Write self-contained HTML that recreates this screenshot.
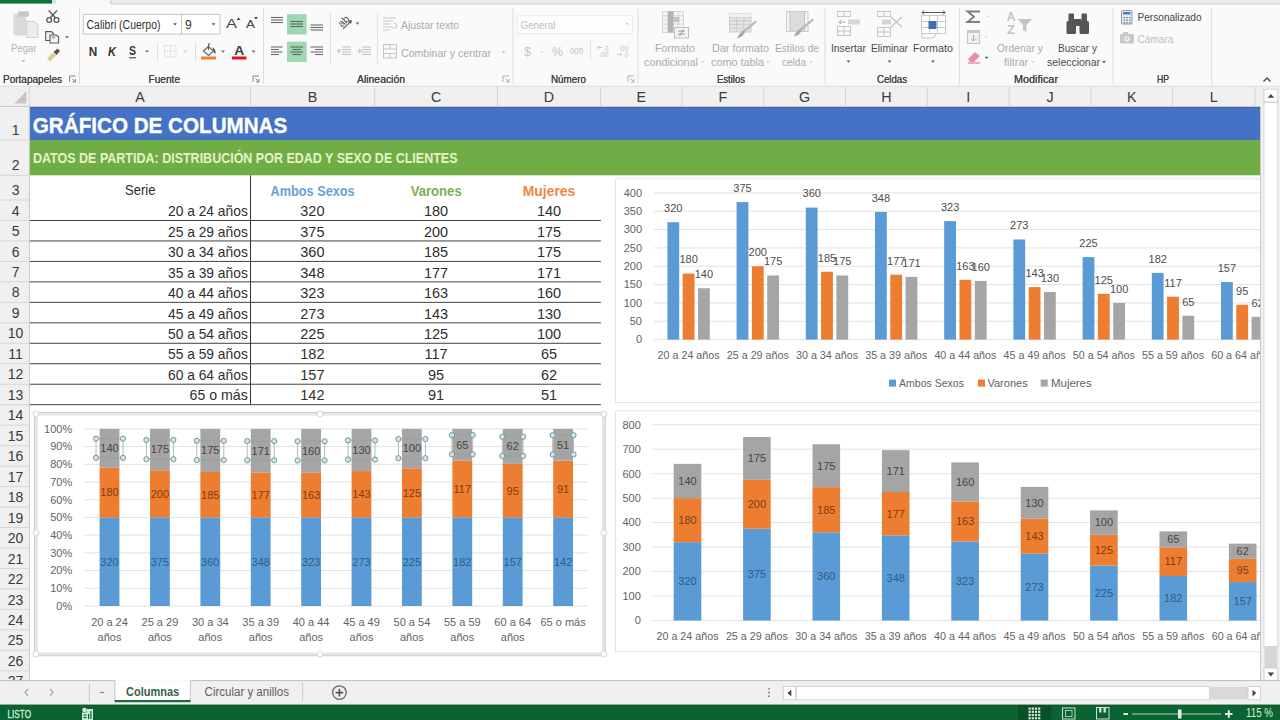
<!DOCTYPE html>
<html><head><meta charset="utf-8"><style>
html,body{margin:0;padding:0;width:1280px;height:720px;overflow:hidden;background:#fff}
svg{display:block}
text{font-family:"Liberation Sans",sans-serif}
</style></head><body>
<svg width="1280" height="720" viewBox="0 0 1280 720">
<rect x="0.00" y="0.00" width="1280.00" height="720.00" fill="#ffffff" />
<rect x="0.00" y="0.00" width="1280.00" height="5.00" fill="#f9f9f9" />
<rect x="0.00" y="0.00" width="52.00" height="3.60" fill="#12703b" />
<rect x="52.00" y="0.00" width="4.00" height="3.60" fill="#cfe9d6" />
<rect x="110.50" y="0.00" width="1169.50" height="3.60" fill="#ececec" />
<line x1="110.80" y1="0.00" x2="110.80" y2="4.00" stroke="#c8c8c8" stroke-width="1" />
<line x1="110.50" y1="3.90" x2="1280.00" y2="3.90" stroke="#cccccc" stroke-width="0.9" />
<rect x="0.00" y="5.00" width="1280.00" height="81.00" fill="#fafafa" />
<line x1="0.00" y1="86.30" x2="1280.00" y2="86.30" stroke="#d6d6d6" stroke-width="1" />
<line x1="79.50" y1="8.00" x2="79.50" y2="84.00" stroke="#dcdcdc" stroke-width="1" />
<line x1="263.50" y1="8.00" x2="263.50" y2="84.00" stroke="#dcdcdc" stroke-width="1" />
<line x1="513.00" y1="8.00" x2="513.00" y2="84.00" stroke="#dcdcdc" stroke-width="1" />
<line x1="638.00" y1="8.00" x2="638.00" y2="84.00" stroke="#dcdcdc" stroke-width="1" />
<line x1="825.00" y1="8.00" x2="825.00" y2="84.00" stroke="#dcdcdc" stroke-width="1" />
<line x1="959.40" y1="8.00" x2="959.40" y2="84.00" stroke="#dcdcdc" stroke-width="1" />
<line x1="1113.00" y1="8.00" x2="1113.00" y2="84.00" stroke="#dcdcdc" stroke-width="1" />
<line x1="1211.60" y1="8.00" x2="1211.60" y2="84.00" stroke="#dcdcdc" stroke-width="1" />
<text x="32.50" y="83.35" font-size="11" fill="#444444" text-anchor="middle" textLength="59.00" lengthAdjust="spacingAndGlyphs" >Portapapeles</text>
<text x="164.30" y="83.35" font-size="11" fill="#444444" text-anchor="middle" textLength="31.40" lengthAdjust="spacingAndGlyphs" >Fuente</text>
<text x="381.00" y="83.35" font-size="11" fill="#444444" text-anchor="middle" textLength="48.00" lengthAdjust="spacingAndGlyphs" >Alineación</text>
<text x="568.50" y="83.35" font-size="11" fill="#444444" text-anchor="middle" textLength="35.00" lengthAdjust="spacingAndGlyphs" >Número</text>
<text x="731.00" y="83.35" font-size="11" fill="#444444" text-anchor="middle" textLength="28.00" lengthAdjust="spacingAndGlyphs" >Estilos</text>
<text x="892.00" y="83.35" font-size="11" fill="#444444" text-anchor="middle" textLength="30.00" lengthAdjust="spacingAndGlyphs" >Celdas</text>
<text x="1036.00" y="83.35" font-size="11" fill="#444444" text-anchor="middle" textLength="44.00" lengthAdjust="spacingAndGlyphs" >Modificar</text>
<text x="1163.00" y="83.35" font-size="11" fill="#444444" text-anchor="middle" textLength="12.00" lengthAdjust="spacingAndGlyphs" >HP</text>
<rect x="13.5" y="13.6" width="12.8" height="22" rx="1.5" fill="#d9d9d9"/>
<rect x="18" y="11.3" width="11" height="5.5" rx="1.5" fill="#c9c9c9"/>
<path d="M26.7 21.3 H34.5 L38 24.8 V37.5 H26.7 Z" fill="#ececec" stroke="#cfcfcf" stroke-width="1"/>
<text x="23.80" y="51.52" font-size="11.5" fill="#b3b3b3" text-anchor="middle" textLength="25.60" lengthAdjust="spacingAndGlyphs" >Pegar</text>
<polygon points="21.70,60.10 25.30,60.10 23.50,62.20" fill="#b8b8b8"/>
<g fill="none" stroke="#5a5a5a" stroke-width="1.3"><circle cx="49.2" cy="20" r="2.4"/><circle cx="56.5" cy="20" r="2.4"/><path d="M50.3 17.8 L57 10.5 M55.4 17.8 L48.7 10.5"/></g>
<g fill="#f4f4f4" stroke="#5a5a5a" stroke-width="1.1"><path d="M45.7 31.6 H51.5 L53.5 33.6 V40.5 H45.7 Z"/><path d="M50 35 H56.5 L58.6 37.1 V43 H50 Z"/></g>
<circle cx="53.5" cy="37" r="2" fill="#9ec3d8"/>
<polygon points="65.00,36.30 69.00,36.30 67.00,38.60" fill="#666"/>
<path d="M47 58.5 L53 52.5 L56 55.5 L50 61.5 Z" fill="#d8d08a"/><path d="M53.5 52 L57.5 48.5 L60 51 L56.5 55 Z" fill="#555"/>
<text x="32.50" y="83.35" font-size="11" fill="#444444" text-anchor="middle" textLength="59.00" lengthAdjust="spacingAndGlyphs" >Portapapeles</text>
<path d="M69.5 82 V76 H75.5" fill="none" stroke="#777" stroke-width="0.9"/><path d="M72.0 78.5 L75.5 82 M75.5 79 V82 H72.5" fill="none" stroke="#777" stroke-width="0.9"/>
<rect x="83.3" y="14.4" width="98.2" height="19.6" fill="#ffffff" stroke="#c6c6c6" stroke-width="1"/>
<rect x="181.5" y="14.4" width="38.5" height="19.6" fill="#ffffff" stroke="#c6c6c6" stroke-width="1"/>
<text x="86.50" y="28.70" font-size="12" fill="#333333" text-anchor="start" textLength="74.00" lengthAdjust="spacingAndGlyphs" >Calibri (Cuerpo)</text>
<polygon points="173.10,23.35 176.90,23.35 175.00,25.55" fill="#555"/>
<text x="185.00" y="28.70" font-size="12" fill="#333333" text-anchor="start" >9</text>
<polygon points="211.60,23.35 215.40,23.35 213.50,25.55" fill="#555"/>
<text x="231.50" y="28.35" font-size="13" fill="#444" text-anchor="middle" textLength="11.00" lengthAdjust="spacingAndGlyphs" >A</text>
<path d="M236.5 20 L238.5 17.5 L240.5 20 Z" fill="#444"/>
<text x="250.50" y="28.35" font-size="11" fill="#444" text-anchor="middle" textLength="9.00" lengthAdjust="spacingAndGlyphs" >A</text>
<path d="M254 17 L256 19.5 L258 17 Z" fill="#444"/>
<text x="93.00" y="55.88" font-size="12.5" fill="#333" text-anchor="middle" font-weight="bold" textLength="8.50" lengthAdjust="spacingAndGlyphs" >N</text>
<text x="112.00" y="55.88" font-size="12.5" fill="#333" text-anchor="middle" font-weight="bold" textLength="8.00" lengthAdjust="spacingAndGlyphs" font-style="italic">K</text>
<text x="132.50" y="55.20" font-size="12" fill="#333" text-anchor="middle" font-weight="bold" textLength="7.00" lengthAdjust="spacingAndGlyphs" >S</text>
<line x1="129.00" y1="57.80" x2="136.00" y2="57.80" stroke="#333" stroke-width="1" />
<polygon points="145.10,50.55 148.90,50.55 147.00,52.75" fill="#666"/>
<line x1="157.50" y1="42.00" x2="157.50" y2="62.00" stroke="#e0e0e0" stroke-width="1" />
<g fill="none" stroke="#d0d0d0" stroke-width="1" stroke-dasharray="1.2 1"><rect x="164.5" y="45.5" width="11.5" height="11.5"/><path d="M170.25 45.5 V57 M164.5 51.25 H176"/></g>
<polygon points="183.10,50.55 186.90,50.55 185.00,52.75" fill="#c8c8c8"/>
<line x1="195.50" y1="42.00" x2="195.50" y2="62.00" stroke="#e0e0e0" stroke-width="1" />
<path d="M203.5 51 L208.5 46.5 L213.5 51 L208.5 55.5 Z" fill="#fff" stroke="#606060" stroke-width="1.1"/><path d="M208.5 50 V44.5 Q209 43 210 44.5" fill="none" stroke="#606060" stroke-width="1.1"/><path d="M212.5 47 Q216 49 215.5 53.5 L214 53.5 Z" fill="#4a6070"/>
<rect x="201.00" y="56.50" width="15.00" height="3.00" fill="#ed7d31" />
<polygon points="221.10,50.55 224.90,50.55 223.00,52.75" fill="#666"/>
<text x="239.20" y="55.17" font-size="12.5" fill="#404040" text-anchor="middle" font-weight="bold" textLength="10.00" lengthAdjust="spacingAndGlyphs" >A</text>
<rect x="232.00" y="56.50" width="14.50" height="3.00" fill="#e0131e" />
<polygon points="251.60,50.55 255.40,50.55 253.50,52.75" fill="#666"/>
<text x="164.30" y="83.35" font-size="11" fill="#444444" text-anchor="middle" textLength="31.40" lengthAdjust="spacingAndGlyphs" >Fuente</text>
<path d="M253 82 V76 H259" fill="none" stroke="#777" stroke-width="0.9"/><path d="M255.5 78.5 L259 82 M259 79 V82 H256" fill="none" stroke="#777" stroke-width="0.9"/>
<line x1="271.00" y1="17.50" x2="283.00" y2="17.50" stroke="#6a6a6a" stroke-width="1.1" />
<line x1="271.00" y1="20.00" x2="283.00" y2="20.00" stroke="#6a6a6a" stroke-width="1.1" />
<line x1="271.00" y1="22.50" x2="283.00" y2="22.50" stroke="#6a6a6a" stroke-width="1.1" />
<rect x="287.00" y="14.20" width="19.70" height="20.30" fill="#9fd7b4" />
<line x1="290.50" y1="21.50" x2="303.00" y2="21.50" stroke="#5a6a60" stroke-width="1.1" />
<line x1="290.50" y1="24.00" x2="303.00" y2="24.00" stroke="#5a6a60" stroke-width="1.1" />
<line x1="290.50" y1="26.50" x2="303.00" y2="26.50" stroke="#5a6a60" stroke-width="1.1" />
<line x1="310.50" y1="25.00" x2="323.00" y2="25.00" stroke="#6a6a6a" stroke-width="1.1" />
<line x1="310.50" y1="27.50" x2="323.00" y2="27.50" stroke="#6a6a6a" stroke-width="1.1" />
<line x1="310.50" y1="30.00" x2="323.00" y2="30.00" stroke="#6a6a6a" stroke-width="1.1" />
<line x1="271.00" y1="47.00" x2="282.50" y2="47.00" stroke="#6a6a6a" stroke-width="1.1" />
<line x1="271.00" y1="49.50" x2="279.00" y2="49.50" stroke="#6a6a6a" stroke-width="1.1" />
<line x1="271.00" y1="52.00" x2="282.50" y2="52.00" stroke="#6a6a6a" stroke-width="1.1" />
<line x1="271.00" y1="54.50" x2="279.00" y2="54.50" stroke="#6a6a6a" stroke-width="1.1" />
<rect x="287.00" y="41.60" width="19.70" height="20.40" fill="#9fd7b4" />
<line x1="290.50" y1="47.00" x2="303.00" y2="47.00" stroke="#5a6a60" stroke-width="1.1" />
<line x1="292.50" y1="49.50" x2="301.00" y2="49.50" stroke="#5a6a60" stroke-width="1.1" />
<line x1="290.50" y1="52.00" x2="303.00" y2="52.00" stroke="#5a6a60" stroke-width="1.1" />
<line x1="292.50" y1="54.50" x2="301.00" y2="54.50" stroke="#5a6a60" stroke-width="1.1" />
<line x1="310.50" y1="47.00" x2="323.00" y2="47.00" stroke="#6a6a6a" stroke-width="1.1" />
<line x1="315.00" y1="49.50" x2="323.00" y2="49.50" stroke="#6a6a6a" stroke-width="1.1" />
<line x1="310.50" y1="52.00" x2="323.00" y2="52.00" stroke="#6a6a6a" stroke-width="1.1" />
<line x1="315.00" y1="54.50" x2="323.00" y2="54.50" stroke="#6a6a6a" stroke-width="1.1" />
<line x1="330.50" y1="13.00" x2="330.50" y2="64.00" stroke="#e0e0e0" stroke-width="1" />
<text x="337.5" y="25.5" font-size="10.5" fill="#555" transform="rotate(-45 342.5 21.5)">ab</text>
<path d="M343 29 L351 21" fill="none" stroke="#666" stroke-width="1.1"/><path d="M352 20 L348 21 L351 24 Z" fill="#555"/>
<polygon points="355.60,22.55 359.40,22.55 357.50,24.75" fill="#666"/>
<line x1="342.00" y1="47.00" x2="351.00" y2="47.00" stroke="#c4c4c4" stroke-width="1.1" />
<line x1="342.00" y1="49.50" x2="351.00" y2="49.50" stroke="#c4c4c4" stroke-width="1.1" />
<line x1="342.00" y1="52.00" x2="351.00" y2="52.00" stroke="#c4c4c4" stroke-width="1.1" />
<line x1="342.00" y1="54.50" x2="351.00" y2="54.50" stroke="#c4c4c4" stroke-width="1.1" />
<line x1="362.00" y1="47.00" x2="371.00" y2="47.00" stroke="#c4c4c4" stroke-width="1.1" />
<line x1="362.00" y1="49.50" x2="371.00" y2="49.50" stroke="#c4c4c4" stroke-width="1.1" />
<line x1="362.00" y1="52.00" x2="371.00" y2="52.00" stroke="#c4c4c4" stroke-width="1.1" />
<line x1="362.00" y1="54.50" x2="371.00" y2="54.50" stroke="#c4c4c4" stroke-width="1.1" />
<path d="M341 51 L337.5 51 M339.5 49 L337.5 51 L339.5 53" fill="none" stroke="#c4c4c4" stroke-width="1.1"/>
<path d="M357.5 51 L361 51 M359 49 L361 51 L359 53" fill="none" stroke="#c4c4c4" stroke-width="1.1"/>
<line x1="377.50" y1="13.00" x2="377.50" y2="64.00" stroke="#e0e0e0" stroke-width="1" />
<g stroke="#c8c8c8" stroke-width="1.1" fill="none"><path d="M383 18 H396 M383 21 H393 M383 24 H390 M383 27 H393 M383 30 H390"/><path d="M394 23 Q398 24 396 28 L393 28"/></g>
<text x="401.00" y="29.02" font-size="11.5" fill="#ababab" text-anchor="start" textLength="58.00" lengthAdjust="spacingAndGlyphs" >Ajustar texto</text>
<g stroke="#c8c8c8" stroke-width="1.1" fill="none"><rect x="383.5" y="44.5" width="13" height="13.5"/><path d="M383.5 49 H396.5 M383.5 53.5 H396.5 M390 44.5 V49 M390 53.5 V58"/></g>
<text x="401.00" y="56.52" font-size="11.5" fill="#ababab" text-anchor="start" textLength="90.00" lengthAdjust="spacingAndGlyphs" >Combinar y centrar</text>
<polygon points="501.70,51.10 505.30,51.10 503.50,53.20" fill="#c4c4c4"/>
<text x="381.00" y="83.35" font-size="11" fill="#444444" text-anchor="middle" textLength="48.00" lengthAdjust="spacingAndGlyphs" >Alineación</text>
<path d="M503 82 V76 H509" fill="none" stroke="#aaa" stroke-width="0.9"/><path d="M505.5 78.5 L509 82 M509 79 V82 H506" fill="none" stroke="#aaa" stroke-width="0.9"/>
<rect x="517" y="15.6" width="115.5" height="18.2" fill="#fdfdfd" stroke="#ececec" stroke-width="1"/>
<text x="520.50" y="28.52" font-size="11.5" fill="#c0c0c0" text-anchor="start" textLength="35.00" lengthAdjust="spacingAndGlyphs" >General</text>
<polygon points="625.20,23.10 628.80,23.10 627.00,25.20" fill="#cfcfcf"/>
<text x="527.50" y="56.05" font-size="13" fill="#c4c4c4" text-anchor="middle" textLength="7.00" lengthAdjust="spacingAndGlyphs" >$</text>
<polygon points="540.40,51.20 543.60,51.20 542.00,53.10" fill="#cfcfcf"/>
<text x="557.50" y="55.88" font-size="12.5" fill="#c4c4c4" text-anchor="middle" textLength="11.00" lengthAdjust="spacingAndGlyphs" >%</text>
<text x="576.50" y="54.48" font-size="8.5" fill="#c4c4c4" text-anchor="middle" textLength="13.00" lengthAdjust="spacingAndGlyphs" >000</text>
<line x1="590.50" y1="40.00" x2="590.50" y2="61.00" stroke="#e4e4e4" stroke-width="1" />
<text x="606.50" y="50.57" font-size="6.5" fill="#c2c2c2" text-anchor="middle" >0</text>
<text x="604.50" y="57.07" font-size="6.5" fill="#c2c2c2" text-anchor="middle" textLength="8.00" lengthAdjust="spacingAndGlyphs" >00</text>
<path d="M597.5 47.5 H602 M599.3 45.8 L597.5 47.5 L599.3 49.2" fill="none" stroke="#c4c4c4" stroke-width="0.9"/>
<text x="624.50" y="50.57" font-size="6.5" fill="#c2c2c2" text-anchor="middle" textLength="8.00" lengthAdjust="spacingAndGlyphs" >00</text>
<text x="626.50" y="57.07" font-size="6.5" fill="#c2c2c2" text-anchor="middle" >0</text>
<path d="M617 54.5 H622 M620.2 52.8 L622 54.5 L620.2 56.2" fill="none" stroke="#c4c4c4" stroke-width="0.9"/>
<text x="568.50" y="83.35" font-size="11" fill="#444444" text-anchor="middle" textLength="35.00" lengthAdjust="spacingAndGlyphs" >Número</text>
<path d="M628 82 V76 H634" fill="none" stroke="#aaa" stroke-width="0.9"/><path d="M630.5 78.5 L634 82 M634 79 V82 H631" fill="none" stroke="#aaa" stroke-width="0.9"/>
<rect x="662.5" y="11.5" width="21" height="21" fill="#f6f6f6" stroke="#d6d6d6" stroke-width="1"/>
<line x1="667.75" y1="11.50" x2="667.75" y2="32.50" stroke="#d6d6d6" stroke-width="1" />
<line x1="673.00" y1="11.50" x2="673.00" y2="32.50" stroke="#d6d6d6" stroke-width="1" />
<line x1="678.25" y1="11.50" x2="678.25" y2="32.50" stroke="#d6d6d6" stroke-width="1" />
<line x1="662.50" y1="15.70" x2="683.50" y2="15.70" stroke="#d6d6d6" stroke-width="1" />
<line x1="662.50" y1="19.90" x2="683.50" y2="19.90" stroke="#d6d6d6" stroke-width="1" />
<line x1="662.50" y1="24.10" x2="683.50" y2="24.10" stroke="#d6d6d6" stroke-width="1" />
<line x1="662.50" y1="28.30" x2="683.50" y2="28.30" stroke="#d6d6d6" stroke-width="1" />
<rect x="668.00" y="11.50" width="5.50" height="21.00" fill="#b4b4b4" />
<rect x="673.50" y="17.00" width="6.00" height="5.00" fill="#c4c4c4" />
<rect x="674.5" y="27.5" width="14" height="10.5" fill="#f4f4f4" stroke="#bdbdbd" stroke-width="1"/>
<path d="M678 31 H685 M678 34 H685 M683.5 29.5 L679.5 36" fill="none" stroke="#9a9a9a" stroke-width="1"/>
<text x="675.00" y="52.23" font-size="11.5" fill="#ababab" text-anchor="middle" textLength="40.00" lengthAdjust="spacingAndGlyphs" >Formato</text>
<text x="671.00" y="66.23" font-size="11.5" fill="#ababab" text-anchor="middle" textLength="54.00" lengthAdjust="spacingAndGlyphs" >condicional</text>
<polygon points="701.40,61.20 704.60,61.20 703.00,63.10" fill="#cacaca"/>
<rect x="729.5" y="13.5" width="21.5" height="18.5" fill="#e4e4e4" stroke="#cdcdcd" stroke-width="1"/>
<line x1="736.67" y1="13.50" x2="736.67" y2="32.00" stroke="#cdcdcd" stroke-width="1" />
<line x1="743.83" y1="13.50" x2="743.83" y2="32.00" stroke="#cdcdcd" stroke-width="1" />
<line x1="729.50" y1="17.20" x2="751.00" y2="17.20" stroke="#cdcdcd" stroke-width="1" />
<line x1="729.50" y1="20.90" x2="751.00" y2="20.90" stroke="#cdcdcd" stroke-width="1" />
<line x1="729.50" y1="24.60" x2="751.00" y2="24.60" stroke="#cdcdcd" stroke-width="1" />
<line x1="729.50" y1="28.30" x2="751.00" y2="28.30" stroke="#cdcdcd" stroke-width="1" />
<rect x="729.50" y="13.50" width="21.50" height="3.50" fill="#f2f2f2" />
<path d="M755.5 20.5 L757 22 L745 32 L743.5 30.5 Z" fill="#b8b8b8"/><path d="M743.5 30.5 L745 32 Q743 37 737 38.5 Q739 33 743.5 30.5 Z" fill="#a8a8a8"/>
<text x="740.50" y="52.23" font-size="11.5" fill="#ababab" text-anchor="middle" textLength="57.00" lengthAdjust="spacingAndGlyphs" >Dar formato</text>
<text x="737.50" y="66.23" font-size="11.5" fill="#ababab" text-anchor="middle" textLength="53.00" lengthAdjust="spacingAndGlyphs" >como tabla</text>
<polygon points="766.40,61.20 769.60,61.20 768.00,63.10" fill="#cacaca"/>
<rect x="786.5" y="11.5" width="21.5" height="20" fill="#f4f4f4" stroke="#cdcdcd" stroke-width="1"/>
<rect x="790.00" y="12.00" width="14.50" height="19.00" fill="#dcdcdc" />
<line x1="790.00" y1="11.50" x2="790.00" y2="31.50" stroke="#c4c4c4" stroke-width="1" />
<line x1="804.50" y1="11.50" x2="804.50" y2="31.50" stroke="#c4c4c4" stroke-width="1" />
<path d="M812.5 18.5 L814 20 L802 30 L800.5 28.5 Z" fill="#b8b8b8"/><path d="M800.5 28.5 L802 30 Q800 35 794 36.5 Q796 31 800.5 28.5 Z" fill="#a8a8a8"/>
<text x="797.00" y="52.23" font-size="11.5" fill="#ababab" text-anchor="middle" textLength="44.00" lengthAdjust="spacingAndGlyphs" >Estilos de</text>
<text x="794.00" y="66.23" font-size="11.5" fill="#ababab" text-anchor="middle" textLength="24.00" lengthAdjust="spacingAndGlyphs" >celda</text>
<polygon points="809.40,61.20 812.60,61.20 811.00,63.10" fill="#cacaca"/>
<text x="731.00" y="83.35" font-size="11" fill="#444444" text-anchor="middle" textLength="28.00" lengthAdjust="spacingAndGlyphs" >Estilos</text>
<g fill="none" stroke="#c6c6c6" stroke-width="1"><rect x="837.5" y="11.5" width="13" height="5"/><path d="M844 11.5 V16.5"/><rect x="837.5" y="26.5" width="13" height="9"/><path d="M844 26.5 V35.5 M837.5 31 H850.5"/></g>
<rect x="848" y="19.5" width="12" height="5" fill="#d6d6d6"/><path d="M839 22 H845 M841 20 L839 22 L841 24" fill="none" stroke="#aaa" stroke-width="1"/>
<text x="848.50" y="52.23" font-size="11.5" fill="#4a4a4a" text-anchor="middle" textLength="35.00" lengthAdjust="spacingAndGlyphs" >Insertar</text>
<polygon points="846.60,60.55 850.40,60.55 848.50,62.75" fill="#555"/>
<g fill="none" stroke="#c6c6c6" stroke-width="1"><rect x="877.5" y="11.5" width="13" height="5"/><path d="M884 11.5 V16.5"/><rect x="877.5" y="27.5" width="13" height="9"/><path d="M884 27.5 V36.5 M877.5 32 H890.5"/></g>
<rect x="882" y="19.5" width="9" height="5" fill="#d6d6d6"/><path d="M891 17 L902 27 M902 17 L891 27" stroke="#c2c2c2" stroke-width="1.2"/>
<text x="889.50" y="52.23" font-size="11.5" fill="#4a4a4a" text-anchor="middle" textLength="37.00" lengthAdjust="spacingAndGlyphs" >Eliminar</text>
<polygon points="887.60,60.55 891.40,60.55 889.50,62.75" fill="#555"/>
<rect x="921.5" y="15.5" width="24" height="18" fill="#ffffff" stroke="#c8c8c8" stroke-width="1"/>
<line x1="929.50" y1="15.50" x2="929.50" y2="33.50" stroke="#c8c8c8" stroke-width="1" />
<line x1="937.50" y1="15.50" x2="937.50" y2="33.50" stroke="#c8c8c8" stroke-width="1" />
<line x1="921.50" y1="21.50" x2="945.50" y2="21.50" stroke="#c8c8c8" stroke-width="1" />
<line x1="921.50" y1="27.50" x2="945.50" y2="27.50" stroke="#c8c8c8" stroke-width="1" />
<rect x="928.50" y="21.00" width="8.00" height="8.00" fill="#3f6fb5" />
<path d="M922 12.5 H945 M924 10.5 L922 12.5 L924 14.5 M943 10.5 L945 12.5 L943 14.5" fill="none" stroke="#555" stroke-width="1"/>
<path d="M922 33.5 V38 H932 Q936 37 936 33.5" fill="none" stroke="#c8c8c8" stroke-width="1"/>
<text x="933.00" y="52.23" font-size="11.5" fill="#4a4a4a" text-anchor="middle" textLength="40.00" lengthAdjust="spacingAndGlyphs" >Formato</text>
<polygon points="931.10,60.55 934.90,60.55 933.00,62.75" fill="#555"/>
<text x="892.00" y="83.35" font-size="11" fill="#444444" text-anchor="middle" textLength="30.00" lengthAdjust="spacingAndGlyphs" >Celdas</text>
<path d="M980 11.5 H967.5 L974 16.8 L967.5 22 H980" fill="none" stroke="#808080" stroke-width="1.9" stroke-linejoin="miter"/>
<polygon points="986.50,15.75 989.50,15.75 988.00,17.55" fill="#d0d0d0"/>
<rect x="967.5" y="30.5" width="12" height="13" fill="#f0f0f0" stroke="#c4c4c4" stroke-width="1"/><rect x="967.5" y="30.5" width="12" height="2.5" fill="#c8c8c8"/><path d="M973.5 35 V41 M971 38.5 L973.5 41 L976 38.5" fill="none" stroke="#aaa" stroke-width="1"/>
<polygon points="984.50,36.25 987.50,36.25 986.00,38.05" fill="#d0d0d0"/>
<path d="M968 59 L975 52 L980 56 L974 62 L970 62 Z" fill="#e88fa5"/><path d="M968 63 H980" stroke="#e06080" stroke-width="1"/>
<polygon points="984.60,56.85 988.40,56.85 986.50,59.05" fill="#555"/>
<text x="1011.00" y="20.70" font-size="12" fill="#c2c2c2" text-anchor="middle" font-weight="bold" textLength="8.50" lengthAdjust="spacingAndGlyphs" >A</text>
<text x="1011.00" y="34.20" font-size="12" fill="#c2c2c2" text-anchor="middle" font-weight="bold" textLength="8.00" lengthAdjust="spacingAndGlyphs" >Z</text>
<path d="M1017.5 19 H1032 L1026.5 25 V32 L1023 30 V25 Z" fill="#c4c4c4"/>
<text x="1020.00" y="52.23" font-size="11.5" fill="#ababab" text-anchor="middle" textLength="46.00" lengthAdjust="spacingAndGlyphs" >Ordenar y</text>
<text x="1016.00" y="66.23" font-size="11.5" fill="#ababab" text-anchor="middle" textLength="24.00" lengthAdjust="spacingAndGlyphs" >filtrar</text>
<polygon points="1031.40,61.20 1034.60,61.20 1033.00,63.10" fill="#cacaca"/>
<g fill="#555555"><rect x="1066.5" y="21" width="9.5" height="13" rx="1.5"/><rect x="1079.5" y="21" width="9.5" height="13" rx="1.5"/><rect x="1068.5" y="13.5" width="5.5" height="9" rx="1"/><rect x="1081.5" y="13.5" width="5.5" height="9" rx="1"/><rect x="1074" y="19" width="7.5" height="7"/></g>
<text x="1077.50" y="52.23" font-size="11.5" fill="#4a4a4a" text-anchor="middle" textLength="39.00" lengthAdjust="spacingAndGlyphs" >Buscar y</text>
<text x="1073.50" y="66.23" font-size="11.5" fill="#4a4a4a" text-anchor="middle" textLength="53.00" lengthAdjust="spacingAndGlyphs" >seleccionar</text>
<polygon points="1102.10,61.05 1105.90,61.05 1104.00,63.25" fill="#555"/>
<text x="1036.00" y="83.35" font-size="11" fill="#444444" text-anchor="middle" textLength="44.00" lengthAdjust="spacingAndGlyphs" >Modificar</text>
<rect x="1121.5" y="10.5" width="10.5" height="13.5" rx="1" fill="#e8eef4" stroke="#8a9aab" stroke-width="1"/><rect x="1123" y="12" width="7.5" height="2.5" fill="#4a7ab5"/>
<rect x="1123.50" y="17.00" width="1.60" height="1.40" fill="#7f8c99" />
<rect x="1126.20" y="17.00" width="1.60" height="1.40" fill="#7f8c99" />
<rect x="1129.00" y="17.00" width="1.60" height="1.40" fill="#7f8c99" />
<rect x="1123.50" y="19.50" width="1.60" height="1.40" fill="#7f8c99" />
<rect x="1126.20" y="19.50" width="1.60" height="1.40" fill="#7f8c99" />
<rect x="1129.00" y="19.50" width="1.60" height="1.40" fill="#7f8c99" />
<rect x="1123.50" y="22.00" width="1.60" height="1.40" fill="#7f8c99" />
<rect x="1126.20" y="22.00" width="1.60" height="1.40" fill="#7f8c99" />
<rect x="1129.00" y="22.00" width="1.60" height="1.40" fill="#7f8c99" />
<text x="1137.50" y="21.22" font-size="11.5" fill="#444" text-anchor="start" textLength="64.00" lengthAdjust="spacingAndGlyphs" >Personalizado</text>
<rect x="1120" y="34" width="14" height="9.5" rx="1.5" fill="#c8c8c8"/><rect x="1123" y="32" width="5" height="3" fill="#c8c8c8"/><circle cx="1127" cy="38.8" r="2.6" fill="#f4f4f4"/><circle cx="1127" cy="38.8" r="1.3" fill="#c8c8c8"/>
<text x="1137.50" y="42.52" font-size="11.5" fill="#bdbdbd" text-anchor="start" textLength="36.00" lengthAdjust="spacingAndGlyphs" >Cámara</text>
<text x="1163.00" y="83.35" font-size="11" fill="#444444" text-anchor="middle" textLength="12.00" lengthAdjust="spacingAndGlyphs" >HP</text>
<path d="M1263.5 81.5 L1267 78 L1270.5 81.5" fill="none" stroke="#444" stroke-width="1.3"/>
<rect x="0.00" y="86.80" width="1280.00" height="20.20" fill="#f0f0f0" />
<line x1="0.00" y1="106.50" x2="1260.50" y2="106.50" stroke="#c9c9c9" stroke-width="1" />
<line x1="29.40" y1="87.00" x2="29.40" y2="106.50" stroke="#d4d4d4" stroke-width="1" />
<line x1="250.50" y1="87.00" x2="250.50" y2="106.50" stroke="#d4d4d4" stroke-width="1" />
<line x1="374.70" y1="87.00" x2="374.70" y2="106.50" stroke="#d4d4d4" stroke-width="1" />
<line x1="497.40" y1="87.00" x2="497.40" y2="106.50" stroke="#d4d4d4" stroke-width="1" />
<line x1="600.50" y1="87.00" x2="600.50" y2="106.50" stroke="#d4d4d4" stroke-width="1" />
<line x1="681.90" y1="87.00" x2="681.90" y2="106.50" stroke="#d4d4d4" stroke-width="1" />
<line x1="763.70" y1="87.00" x2="763.70" y2="106.50" stroke="#d4d4d4" stroke-width="1" />
<line x1="845.50" y1="87.00" x2="845.50" y2="106.50" stroke="#d4d4d4" stroke-width="1" />
<line x1="927.30" y1="87.00" x2="927.30" y2="106.50" stroke="#d4d4d4" stroke-width="1" />
<line x1="1009.10" y1="87.00" x2="1009.10" y2="106.50" stroke="#d4d4d4" stroke-width="1" />
<line x1="1090.90" y1="87.00" x2="1090.90" y2="106.50" stroke="#d4d4d4" stroke-width="1" />
<line x1="1172.70" y1="87.00" x2="1172.70" y2="106.50" stroke="#d4d4d4" stroke-width="1" />
<line x1="1255.00" y1="87.00" x2="1255.00" y2="106.50" stroke="#d4d4d4" stroke-width="1" />
<text x="139.95" y="101.91" font-size="14.3" fill="#3a3a3a" text-anchor="middle" >A</text>
<text x="312.60" y="101.91" font-size="14.3" fill="#3a3a3a" text-anchor="middle" >B</text>
<text x="436.05" y="101.91" font-size="14.3" fill="#3a3a3a" text-anchor="middle" >C</text>
<text x="548.95" y="101.91" font-size="14.3" fill="#3a3a3a" text-anchor="middle" >D</text>
<text x="641.20" y="101.91" font-size="14.3" fill="#3a3a3a" text-anchor="middle" >E</text>
<text x="722.80" y="101.91" font-size="14.3" fill="#3a3a3a" text-anchor="middle" >F</text>
<text x="804.60" y="101.91" font-size="14.3" fill="#3a3a3a" text-anchor="middle" >G</text>
<text x="886.40" y="101.91" font-size="14.3" fill="#3a3a3a" text-anchor="middle" >H</text>
<text x="968.20" y="101.91" font-size="14.3" fill="#3a3a3a" text-anchor="middle" >I</text>
<text x="1050.00" y="101.91" font-size="14.3" fill="#3a3a3a" text-anchor="middle" >J</text>
<text x="1131.80" y="101.91" font-size="14.3" fill="#3a3a3a" text-anchor="middle" >K</text>
<text x="1213.85" y="101.91" font-size="14.3" fill="#3a3a3a" text-anchor="middle" >L</text>
<polygon points="26.5,91 26.5,103.5 14.4,103.5" fill="#c6c6c6"/>
<rect x="0.00" y="107.00" width="29.40" height="573.50" fill="#f0f0f0" />
<line x1="29.40" y1="106.50" x2="29.40" y2="680.50" stroke="#c9c9c9" stroke-width="1" />
<line x1="0.00" y1="140.00" x2="29.40" y2="140.00" stroke="#d6d6d6" stroke-width="1" />
<text x="15.60" y="135.10" font-size="14" fill="#3a3a3a" text-anchor="middle" >1</text>
<line x1="0.00" y1="175.30" x2="29.40" y2="175.30" stroke="#d6d6d6" stroke-width="1" />
<text x="15.60" y="170.40" font-size="14" fill="#3a3a3a" text-anchor="middle" >2</text>
<line x1="0.00" y1="200.00" x2="29.40" y2="200.00" stroke="#d6d6d6" stroke-width="1" />
<text x="15.60" y="195.10" font-size="14" fill="#3a3a3a" text-anchor="middle" >3</text>
<line x1="0.00" y1="220.47" x2="29.40" y2="220.47" stroke="#d6d6d6" stroke-width="1" />
<text x="15.60" y="215.57" font-size="14" fill="#3a3a3a" text-anchor="middle" >4</text>
<line x1="0.00" y1="240.94" x2="29.40" y2="240.94" stroke="#d6d6d6" stroke-width="1" />
<text x="15.60" y="236.04" font-size="14" fill="#3a3a3a" text-anchor="middle" >5</text>
<line x1="0.00" y1="261.41" x2="29.40" y2="261.41" stroke="#d6d6d6" stroke-width="1" />
<text x="15.60" y="256.51" font-size="14" fill="#3a3a3a" text-anchor="middle" >6</text>
<line x1="0.00" y1="281.88" x2="29.40" y2="281.88" stroke="#d6d6d6" stroke-width="1" />
<text x="15.60" y="276.98" font-size="14" fill="#3a3a3a" text-anchor="middle" >7</text>
<line x1="0.00" y1="302.35" x2="29.40" y2="302.35" stroke="#d6d6d6" stroke-width="1" />
<text x="15.60" y="297.45" font-size="14" fill="#3a3a3a" text-anchor="middle" >8</text>
<line x1="0.00" y1="322.82" x2="29.40" y2="322.82" stroke="#d6d6d6" stroke-width="1" />
<text x="15.60" y="317.92" font-size="14" fill="#3a3a3a" text-anchor="middle" >9</text>
<line x1="0.00" y1="343.29" x2="29.40" y2="343.29" stroke="#d6d6d6" stroke-width="1" />
<text x="15.60" y="338.39" font-size="14" fill="#3a3a3a" text-anchor="middle" >10</text>
<line x1="0.00" y1="363.76" x2="29.40" y2="363.76" stroke="#d6d6d6" stroke-width="1" />
<text x="15.60" y="358.86" font-size="14" fill="#3a3a3a" text-anchor="middle" >11</text>
<line x1="0.00" y1="384.23" x2="29.40" y2="384.23" stroke="#d6d6d6" stroke-width="1" />
<text x="15.60" y="379.33" font-size="14" fill="#3a3a3a" text-anchor="middle" >12</text>
<line x1="0.00" y1="404.70" x2="29.40" y2="404.70" stroke="#d6d6d6" stroke-width="1" />
<text x="15.60" y="399.80" font-size="14" fill="#3a3a3a" text-anchor="middle" >13</text>
<line x1="0.00" y1="425.17" x2="29.40" y2="425.17" stroke="#d6d6d6" stroke-width="1" />
<text x="15.60" y="420.27" font-size="14" fill="#3a3a3a" text-anchor="middle" >14</text>
<line x1="0.00" y1="445.64" x2="29.40" y2="445.64" stroke="#d6d6d6" stroke-width="1" />
<text x="15.60" y="440.74" font-size="14" fill="#3a3a3a" text-anchor="middle" >15</text>
<line x1="0.00" y1="466.11" x2="29.40" y2="466.11" stroke="#d6d6d6" stroke-width="1" />
<text x="15.60" y="461.21" font-size="14" fill="#3a3a3a" text-anchor="middle" >16</text>
<line x1="0.00" y1="486.58" x2="29.40" y2="486.58" stroke="#d6d6d6" stroke-width="1" />
<text x="15.60" y="481.68" font-size="14" fill="#3a3a3a" text-anchor="middle" >17</text>
<line x1="0.00" y1="507.05" x2="29.40" y2="507.05" stroke="#d6d6d6" stroke-width="1" />
<text x="15.60" y="502.15" font-size="14" fill="#3a3a3a" text-anchor="middle" >18</text>
<line x1="0.00" y1="527.52" x2="29.40" y2="527.52" stroke="#d6d6d6" stroke-width="1" />
<text x="15.60" y="522.62" font-size="14" fill="#3a3a3a" text-anchor="middle" >19</text>
<line x1="0.00" y1="547.99" x2="29.40" y2="547.99" stroke="#d6d6d6" stroke-width="1" />
<text x="15.60" y="543.09" font-size="14" fill="#3a3a3a" text-anchor="middle" >20</text>
<line x1="0.00" y1="568.46" x2="29.40" y2="568.46" stroke="#d6d6d6" stroke-width="1" />
<text x="15.60" y="563.56" font-size="14" fill="#3a3a3a" text-anchor="middle" >21</text>
<line x1="0.00" y1="588.93" x2="29.40" y2="588.93" stroke="#d6d6d6" stroke-width="1" />
<text x="15.60" y="584.03" font-size="14" fill="#3a3a3a" text-anchor="middle" >22</text>
<line x1="0.00" y1="609.40" x2="29.40" y2="609.40" stroke="#d6d6d6" stroke-width="1" />
<text x="15.60" y="604.50" font-size="14" fill="#3a3a3a" text-anchor="middle" >23</text>
<line x1="0.00" y1="629.87" x2="29.40" y2="629.87" stroke="#d6d6d6" stroke-width="1" />
<text x="15.60" y="624.97" font-size="14" fill="#3a3a3a" text-anchor="middle" >24</text>
<line x1="0.00" y1="650.34" x2="29.40" y2="650.34" stroke="#d6d6d6" stroke-width="1" />
<text x="15.60" y="645.44" font-size="14" fill="#3a3a3a" text-anchor="middle" >25</text>
<line x1="0.00" y1="670.81" x2="29.40" y2="670.81" stroke="#d6d6d6" stroke-width="1" />
<text x="15.60" y="665.91" font-size="14" fill="#3a3a3a" text-anchor="middle" >26</text>
<line x1="0.00" y1="691.28" x2="29.40" y2="691.28" stroke="#d6d6d6" stroke-width="1" />
<text x="15.60" y="686.38" font-size="14" fill="#3a3a3a" text-anchor="middle" >27</text>
<rect x="29.90" y="107.00" width="1231.10" height="33.00" fill="#4472c4" />
<line x1="29.90" y1="107.50" x2="1260.50" y2="107.50" stroke="#4a6697" stroke-width="1" />
<rect x="29.90" y="140.00" width="1231.10" height="35.30" fill="#70ad47" />
<text x="32.80" y="132.50" font-size="22.5" fill="#ffffff" text-anchor="start" font-weight="bold" textLength="254.50" lengthAdjust="spacingAndGlyphs" stroke="#ffffff" stroke-width="0.35">GRÁFICO DE COLUMNAS</text>
<text x="33.00" y="162.84" font-size="14" fill="#e4f3c6" text-anchor="start" font-weight="bold" textLength="424.50" lengthAdjust="spacingAndGlyphs" >DATOS DE PARTIDA: DISTRIBUCIÓN POR EDAD Y SEXO DE CLIENTES</text>
<text x="140.30" y="195.07" font-size="14.5" fill="#2e2e2e" text-anchor="middle" textLength="30.50" lengthAdjust="spacingAndGlyphs" >Serie</text>
<text x="312.60" y="195.60" font-size="14" fill="#66a1d8" text-anchor="middle" font-weight="bold" textLength="84.00" lengthAdjust="spacingAndGlyphs" >Ambos Sexos</text>
<text x="436.20" y="195.60" font-size="14" fill="#78b156" text-anchor="middle" font-weight="bold" textLength="51.00" lengthAdjust="spacingAndGlyphs" >Varones</text>
<text x="549.00" y="195.60" font-size="14" fill="#ee8646" text-anchor="middle" font-weight="bold" textLength="52.50" lengthAdjust="spacingAndGlyphs" >Mujeres</text>
<text x="247.80" y="216.14" font-size="14.5" fill="#2e2e2e" text-anchor="end" textLength="79.80" lengthAdjust="spacingAndGlyphs" >20 a 24 años</text>
<text x="312.40" y="216.14" font-size="14.5" fill="#2e2e2e" text-anchor="middle" >320</text>
<text x="436.00" y="216.14" font-size="14.5" fill="#2e2e2e" text-anchor="middle" >180</text>
<text x="549.00" y="216.14" font-size="14.5" fill="#2e2e2e" text-anchor="middle" >140</text>
<line x1="29.90" y1="220.47" x2="600.90" y2="220.47" stroke="#404040" stroke-width="1" />
<text x="247.80" y="236.61" font-size="14.5" fill="#2e2e2e" text-anchor="end" textLength="79.80" lengthAdjust="spacingAndGlyphs" >25 a 29 años</text>
<text x="312.40" y="236.61" font-size="14.5" fill="#2e2e2e" text-anchor="middle" >375</text>
<text x="436.00" y="236.61" font-size="14.5" fill="#2e2e2e" text-anchor="middle" >200</text>
<text x="549.00" y="236.61" font-size="14.5" fill="#2e2e2e" text-anchor="middle" >175</text>
<line x1="29.90" y1="240.94" x2="600.90" y2="240.94" stroke="#404040" stroke-width="1" />
<text x="247.80" y="257.08" font-size="14.5" fill="#2e2e2e" text-anchor="end" textLength="79.80" lengthAdjust="spacingAndGlyphs" >30 a 34 años</text>
<text x="312.40" y="257.08" font-size="14.5" fill="#2e2e2e" text-anchor="middle" >360</text>
<text x="436.00" y="257.08" font-size="14.5" fill="#2e2e2e" text-anchor="middle" >185</text>
<text x="549.00" y="257.08" font-size="14.5" fill="#2e2e2e" text-anchor="middle" >175</text>
<line x1="29.90" y1="261.41" x2="600.90" y2="261.41" stroke="#404040" stroke-width="1" />
<text x="247.80" y="277.56" font-size="14.5" fill="#2e2e2e" text-anchor="end" textLength="79.80" lengthAdjust="spacingAndGlyphs" >35 a 39 años</text>
<text x="312.40" y="277.56" font-size="14.5" fill="#2e2e2e" text-anchor="middle" >348</text>
<text x="436.00" y="277.56" font-size="14.5" fill="#2e2e2e" text-anchor="middle" >177</text>
<text x="549.00" y="277.56" font-size="14.5" fill="#2e2e2e" text-anchor="middle" >171</text>
<line x1="29.90" y1="281.88" x2="600.90" y2="281.88" stroke="#404040" stroke-width="1" />
<text x="247.80" y="298.03" font-size="14.5" fill="#2e2e2e" text-anchor="end" textLength="79.80" lengthAdjust="spacingAndGlyphs" >40 a 44 años</text>
<text x="312.40" y="298.03" font-size="14.5" fill="#2e2e2e" text-anchor="middle" >323</text>
<text x="436.00" y="298.03" font-size="14.5" fill="#2e2e2e" text-anchor="middle" >163</text>
<text x="549.00" y="298.03" font-size="14.5" fill="#2e2e2e" text-anchor="middle" >160</text>
<line x1="29.90" y1="302.35" x2="600.90" y2="302.35" stroke="#404040" stroke-width="1" />
<text x="247.80" y="318.50" font-size="14.5" fill="#2e2e2e" text-anchor="end" textLength="79.80" lengthAdjust="spacingAndGlyphs" >45 a 49 años</text>
<text x="312.40" y="318.50" font-size="14.5" fill="#2e2e2e" text-anchor="middle" >273</text>
<text x="436.00" y="318.50" font-size="14.5" fill="#2e2e2e" text-anchor="middle" >143</text>
<text x="549.00" y="318.50" font-size="14.5" fill="#2e2e2e" text-anchor="middle" >130</text>
<line x1="29.90" y1="322.82" x2="600.90" y2="322.82" stroke="#404040" stroke-width="1" />
<text x="247.80" y="338.96" font-size="14.5" fill="#2e2e2e" text-anchor="end" textLength="79.80" lengthAdjust="spacingAndGlyphs" >50 a 54 años</text>
<text x="312.40" y="338.96" font-size="14.5" fill="#2e2e2e" text-anchor="middle" >225</text>
<text x="436.00" y="338.96" font-size="14.5" fill="#2e2e2e" text-anchor="middle" >125</text>
<text x="549.00" y="338.96" font-size="14.5" fill="#2e2e2e" text-anchor="middle" >100</text>
<line x1="29.90" y1="343.29" x2="600.90" y2="343.29" stroke="#404040" stroke-width="1" />
<text x="247.80" y="359.44" font-size="14.5" fill="#2e2e2e" text-anchor="end" textLength="79.80" lengthAdjust="spacingAndGlyphs" >55 a 59 años</text>
<text x="312.40" y="359.44" font-size="14.5" fill="#2e2e2e" text-anchor="middle" >182</text>
<text x="436.00" y="359.44" font-size="14.5" fill="#2e2e2e" text-anchor="middle" >117</text>
<text x="549.00" y="359.44" font-size="14.5" fill="#2e2e2e" text-anchor="middle" >65</text>
<line x1="29.90" y1="363.76" x2="600.90" y2="363.76" stroke="#404040" stroke-width="1" />
<text x="247.80" y="379.91" font-size="14.5" fill="#2e2e2e" text-anchor="end" textLength="79.80" lengthAdjust="spacingAndGlyphs" >60 a 64 años</text>
<text x="312.40" y="379.91" font-size="14.5" fill="#2e2e2e" text-anchor="middle" >157</text>
<text x="436.00" y="379.91" font-size="14.5" fill="#2e2e2e" text-anchor="middle" >95</text>
<text x="549.00" y="379.91" font-size="14.5" fill="#2e2e2e" text-anchor="middle" >62</text>
<line x1="29.90" y1="384.23" x2="600.90" y2="384.23" stroke="#404040" stroke-width="1" />
<text x="247.80" y="400.38" font-size="14.5" fill="#2e2e2e" text-anchor="end" textLength="58.30" lengthAdjust="spacingAndGlyphs" >65 o más</text>
<text x="312.40" y="400.38" font-size="14.5" fill="#2e2e2e" text-anchor="middle" >142</text>
<text x="436.00" y="400.38" font-size="14.5" fill="#2e2e2e" text-anchor="middle" >91</text>
<text x="549.00" y="400.38" font-size="14.5" fill="#2e2e2e" text-anchor="middle" >51</text>
<line x1="29.90" y1="404.70" x2="600.90" y2="404.70" stroke="#404040" stroke-width="1" />
<line x1="250.50" y1="175.30" x2="250.50" y2="404.70" stroke="#383838" stroke-width="1" />
<defs><clipPath id="sheetclip"><rect x="29.9" y="107" width="1230.6" height="573.5"/></clipPath></defs>
<g clip-path="url(#sheetclip)">
<rect x="615.50" y="178.70" width="700.00" height="223.80" fill="#ffffff" stroke="#e3e3e3" stroke-width="1"/>
<line x1="654.00" y1="339.60" x2="1400.00" y2="339.60" stroke="#e2e2e2" stroke-width="1" />
<text x="642.00" y="343.45" font-size="11" fill="#636363" text-anchor="end" >0</text>
<line x1="654.00" y1="321.26" x2="1400.00" y2="321.26" stroke="#e2e2e2" stroke-width="1" />
<text x="642.00" y="325.11" font-size="11" fill="#636363" text-anchor="end" >50</text>
<line x1="654.00" y1="302.93" x2="1400.00" y2="302.93" stroke="#e2e2e2" stroke-width="1" />
<text x="642.00" y="306.78" font-size="11" fill="#636363" text-anchor="end" >100</text>
<line x1="654.00" y1="284.59" x2="1400.00" y2="284.59" stroke="#e2e2e2" stroke-width="1" />
<text x="642.00" y="288.44" font-size="11" fill="#636363" text-anchor="end" >150</text>
<line x1="654.00" y1="266.25" x2="1400.00" y2="266.25" stroke="#e2e2e2" stroke-width="1" />
<text x="642.00" y="270.10" font-size="11" fill="#636363" text-anchor="end" >200</text>
<line x1="654.00" y1="247.91" x2="1400.00" y2="247.91" stroke="#e2e2e2" stroke-width="1" />
<text x="642.00" y="251.76" font-size="11" fill="#636363" text-anchor="end" >250</text>
<line x1="654.00" y1="229.58" x2="1400.00" y2="229.58" stroke="#e2e2e2" stroke-width="1" />
<text x="642.00" y="233.43" font-size="11" fill="#636363" text-anchor="end" >300</text>
<line x1="654.00" y1="211.24" x2="1400.00" y2="211.24" stroke="#e2e2e2" stroke-width="1" />
<text x="642.00" y="215.09" font-size="11" fill="#636363" text-anchor="end" >350</text>
<line x1="654.00" y1="192.90" x2="1400.00" y2="192.90" stroke="#e2e2e2" stroke-width="1" />
<text x="642.00" y="196.75" font-size="11" fill="#636363" text-anchor="end" >400</text>
<rect x="667.40" y="222.24" width="11.80" height="117.36" fill="#5b9bd5" />
<text x="673.30" y="212.09" font-size="11" fill="#4d4d4d" text-anchor="middle" >320</text>
<rect x="682.70" y="273.59" width="11.80" height="66.01" fill="#ed7d31" />
<text x="688.60" y="263.44" font-size="11" fill="#4d4d4d" text-anchor="middle" >180</text>
<rect x="698.00" y="288.25" width="11.80" height="51.35" fill="#a5a5a5" />
<text x="703.90" y="278.11" font-size="11" fill="#4d4d4d" text-anchor="middle" >140</text>
<text x="688.60" y="358.85" font-size="11" fill="#636363" text-anchor="middle" textLength="62.00" lengthAdjust="spacingAndGlyphs" >20 a 24 años</text>
<rect x="736.60" y="202.07" width="11.80" height="137.53" fill="#5b9bd5" />
<text x="742.50" y="191.92" font-size="11" fill="#4d4d4d" text-anchor="middle" >375</text>
<rect x="751.90" y="266.25" width="11.80" height="73.35" fill="#ed7d31" />
<text x="757.80" y="256.10" font-size="11" fill="#4d4d4d" text-anchor="middle" >200</text>
<rect x="767.20" y="275.42" width="11.80" height="64.18" fill="#a5a5a5" />
<text x="773.10" y="265.27" font-size="11" fill="#4d4d4d" text-anchor="middle" >175</text>
<text x="757.80" y="358.85" font-size="11" fill="#636363" text-anchor="middle" textLength="62.00" lengthAdjust="spacingAndGlyphs" >25 a 29 años</text>
<rect x="805.80" y="207.57" width="11.80" height="132.03" fill="#5b9bd5" />
<text x="811.70" y="197.42" font-size="11" fill="#4d4d4d" text-anchor="middle" >360</text>
<rect x="821.10" y="271.75" width="11.80" height="67.85" fill="#ed7d31" />
<text x="827.00" y="261.60" font-size="11" fill="#4d4d4d" text-anchor="middle" >185</text>
<rect x="836.40" y="275.42" width="11.80" height="64.18" fill="#a5a5a5" />
<text x="842.30" y="265.27" font-size="11" fill="#4d4d4d" text-anchor="middle" >175</text>
<text x="827.00" y="358.85" font-size="11" fill="#636363" text-anchor="middle" textLength="62.00" lengthAdjust="spacingAndGlyphs" >30 a 34 años</text>
<rect x="875.00" y="211.97" width="11.80" height="127.63" fill="#5b9bd5" />
<text x="880.90" y="201.82" font-size="11" fill="#4d4d4d" text-anchor="middle" >348</text>
<rect x="890.30" y="274.69" width="11.80" height="64.91" fill="#ed7d31" />
<text x="896.20" y="264.54" font-size="11" fill="#4d4d4d" text-anchor="middle" >177</text>
<rect x="905.60" y="276.89" width="11.80" height="62.71" fill="#a5a5a5" />
<text x="911.50" y="266.74" font-size="11" fill="#4d4d4d" text-anchor="middle" >171</text>
<text x="896.20" y="358.85" font-size="11" fill="#636363" text-anchor="middle" textLength="62.00" lengthAdjust="spacingAndGlyphs" >35 a 39 años</text>
<rect x="944.20" y="221.14" width="11.80" height="118.46" fill="#5b9bd5" />
<text x="950.10" y="210.99" font-size="11" fill="#4d4d4d" text-anchor="middle" >323</text>
<rect x="959.50" y="279.82" width="11.80" height="59.78" fill="#ed7d31" />
<text x="965.40" y="269.67" font-size="11" fill="#4d4d4d" text-anchor="middle" >163</text>
<rect x="974.80" y="280.92" width="11.80" height="58.68" fill="#a5a5a5" />
<text x="980.70" y="270.77" font-size="11" fill="#4d4d4d" text-anchor="middle" >160</text>
<text x="965.40" y="358.85" font-size="11" fill="#636363" text-anchor="middle" textLength="62.00" lengthAdjust="spacingAndGlyphs" >40 a 44 años</text>
<rect x="1013.40" y="239.48" width="11.80" height="100.12" fill="#5b9bd5" />
<text x="1019.30" y="229.33" font-size="11" fill="#4d4d4d" text-anchor="middle" >273</text>
<rect x="1028.70" y="287.15" width="11.80" height="52.45" fill="#ed7d31" />
<text x="1034.60" y="277.00" font-size="11" fill="#4d4d4d" text-anchor="middle" >143</text>
<rect x="1044.00" y="291.92" width="11.80" height="47.68" fill="#a5a5a5" />
<text x="1049.90" y="281.77" font-size="11" fill="#4d4d4d" text-anchor="middle" >130</text>
<text x="1034.60" y="358.85" font-size="11" fill="#636363" text-anchor="middle" textLength="62.00" lengthAdjust="spacingAndGlyphs" >45 a 49 años</text>
<rect x="1082.60" y="257.08" width="11.80" height="82.52" fill="#5b9bd5" />
<text x="1088.50" y="246.93" font-size="11" fill="#4d4d4d" text-anchor="middle" >225</text>
<rect x="1097.90" y="293.76" width="11.80" height="45.84" fill="#ed7d31" />
<text x="1103.80" y="283.61" font-size="11" fill="#4d4d4d" text-anchor="middle" >125</text>
<rect x="1113.20" y="302.93" width="11.80" height="36.68" fill="#a5a5a5" />
<text x="1119.10" y="292.78" font-size="11" fill="#4d4d4d" text-anchor="middle" >100</text>
<text x="1103.80" y="358.85" font-size="11" fill="#636363" text-anchor="middle" textLength="62.00" lengthAdjust="spacingAndGlyphs" >50 a 54 años</text>
<rect x="1151.80" y="272.85" width="11.80" height="66.75" fill="#5b9bd5" />
<text x="1157.70" y="262.70" font-size="11" fill="#4d4d4d" text-anchor="middle" >182</text>
<rect x="1167.10" y="296.69" width="11.80" height="42.91" fill="#ed7d31" />
<text x="1173.00" y="286.54" font-size="11" fill="#4d4d4d" text-anchor="middle" >117</text>
<rect x="1182.40" y="315.76" width="11.80" height="23.84" fill="#a5a5a5" />
<text x="1188.30" y="305.61" font-size="11" fill="#4d4d4d" text-anchor="middle" >65</text>
<text x="1173.00" y="358.85" font-size="11" fill="#636363" text-anchor="middle" textLength="62.00" lengthAdjust="spacingAndGlyphs" >55 a 59 años</text>
<rect x="1221.00" y="282.02" width="11.80" height="57.58" fill="#5b9bd5" />
<text x="1226.90" y="271.87" font-size="11" fill="#4d4d4d" text-anchor="middle" >157</text>
<rect x="1236.30" y="304.76" width="11.80" height="34.84" fill="#ed7d31" />
<text x="1242.20" y="294.61" font-size="11" fill="#4d4d4d" text-anchor="middle" >95</text>
<rect x="1251.60" y="316.86" width="11.80" height="22.74" fill="#a5a5a5" />
<text x="1257.50" y="306.71" font-size="11" fill="#4d4d4d" text-anchor="middle" >62</text>
<text x="1242.20" y="358.85" font-size="11" fill="#636363" text-anchor="middle" textLength="62.00" lengthAdjust="spacingAndGlyphs" >60 a 64 años</text>
<rect x="1290.20" y="287.52" width="11.80" height="52.08" fill="#5b9bd5" />
<text x="1296.10" y="277.37" font-size="11" fill="#4d4d4d" text-anchor="middle" >142</text>
<rect x="1305.50" y="306.23" width="11.80" height="33.37" fill="#ed7d31" />
<text x="1311.40" y="296.08" font-size="11" fill="#4d4d4d" text-anchor="middle" >91</text>
<rect x="1320.80" y="320.90" width="11.80" height="18.70" fill="#a5a5a5" />
<text x="1326.70" y="310.75" font-size="11" fill="#4d4d4d" text-anchor="middle" >51</text>
<text x="1311.40" y="358.85" font-size="11" fill="#636363" text-anchor="middle" >65 o más</text>
<rect x="889.00" y="379.60" width="7.00" height="7.00" fill="#5b9bd5" />
<text x="899.00" y="386.85" font-size="11" fill="#636363" text-anchor="start" textLength="65.00" lengthAdjust="spacingAndGlyphs" >Ambos Sexos</text>
<rect x="978.00" y="379.60" width="7.00" height="7.00" fill="#ed7d31" />
<text x="987.40" y="386.85" font-size="11" fill="#636363" text-anchor="start" textLength="40.40" lengthAdjust="spacingAndGlyphs" >Varones</text>
<rect x="1040.70" y="379.60" width="7.00" height="7.00" fill="#a5a5a5" />
<text x="1051.00" y="386.85" font-size="11" fill="#636363" text-anchor="start" textLength="40.70" lengthAdjust="spacingAndGlyphs" >Mujeres</text>
<rect x="615.50" y="410.80" width="700.00" height="241.00" fill="#ffffff" stroke="#e3e3e3" stroke-width="1"/>
<line x1="652.50" y1="620.50" x2="1400.00" y2="620.50" stroke="#e2e2e2" stroke-width="1" />
<text x="640.80" y="624.35" font-size="11" fill="#636363" text-anchor="end" >0</text>
<line x1="652.50" y1="596.02" x2="1400.00" y2="596.02" stroke="#e2e2e2" stroke-width="1" />
<text x="640.80" y="599.88" font-size="11" fill="#636363" text-anchor="end" >100</text>
<line x1="652.50" y1="571.55" x2="1400.00" y2="571.55" stroke="#e2e2e2" stroke-width="1" />
<text x="640.80" y="575.40" font-size="11" fill="#636363" text-anchor="end" >200</text>
<line x1="652.50" y1="547.08" x2="1400.00" y2="547.08" stroke="#e2e2e2" stroke-width="1" />
<text x="640.80" y="550.93" font-size="11" fill="#636363" text-anchor="end" >300</text>
<line x1="652.50" y1="522.60" x2="1400.00" y2="522.60" stroke="#e2e2e2" stroke-width="1" />
<text x="640.80" y="526.45" font-size="11" fill="#636363" text-anchor="end" >400</text>
<line x1="652.50" y1="498.12" x2="1400.00" y2="498.12" stroke="#e2e2e2" stroke-width="1" />
<text x="640.80" y="501.98" font-size="11" fill="#636363" text-anchor="end" >500</text>
<line x1="652.50" y1="473.65" x2="1400.00" y2="473.65" stroke="#e2e2e2" stroke-width="1" />
<text x="640.80" y="477.50" font-size="11" fill="#636363" text-anchor="end" >600</text>
<line x1="652.50" y1="449.17" x2="1400.00" y2="449.17" stroke="#e2e2e2" stroke-width="1" />
<text x="640.80" y="453.02" font-size="11" fill="#636363" text-anchor="end" >700</text>
<line x1="652.50" y1="424.70" x2="1400.00" y2="424.70" stroke="#e2e2e2" stroke-width="1" />
<text x="640.80" y="428.55" font-size="11" fill="#636363" text-anchor="end" >800</text>
<rect x="673.70" y="542.18" width="27.60" height="78.32" fill="#5b9bd5" />
<text x="687.50" y="585.19" font-size="11" fill="#2f5c86" text-anchor="middle" >320</text>
<rect x="673.70" y="498.12" width="27.60" height="44.06" fill="#ed7d31" />
<text x="687.50" y="524.00" font-size="11" fill="#7e3d12" text-anchor="middle" >180</text>
<rect x="673.70" y="463.86" width="27.60" height="34.27" fill="#a5a5a5" />
<text x="687.50" y="484.84" font-size="11" fill="#454545" text-anchor="middle" >140</text>
<text x="687.50" y="639.85" font-size="11" fill="#636363" text-anchor="middle" textLength="62.00" lengthAdjust="spacingAndGlyphs" >20 a 24 años</text>
<rect x="743.10" y="528.72" width="27.60" height="91.78" fill="#5b9bd5" />
<text x="756.90" y="578.46" font-size="11" fill="#2f5c86" text-anchor="middle" >375</text>
<rect x="743.10" y="479.77" width="27.60" height="48.95" fill="#ed7d31" />
<text x="756.90" y="508.09" font-size="11" fill="#7e3d12" text-anchor="middle" >200</text>
<rect x="743.10" y="436.94" width="27.60" height="42.83" fill="#a5a5a5" />
<text x="756.90" y="462.20" font-size="11" fill="#454545" text-anchor="middle" >175</text>
<text x="756.90" y="639.85" font-size="11" fill="#636363" text-anchor="middle" textLength="62.00" lengthAdjust="spacingAndGlyphs" >25 a 29 años</text>
<rect x="812.50" y="532.39" width="27.60" height="88.11" fill="#5b9bd5" />
<text x="826.30" y="580.29" font-size="11" fill="#2f5c86" text-anchor="middle" >360</text>
<rect x="812.50" y="487.11" width="27.60" height="45.28" fill="#ed7d31" />
<text x="826.30" y="513.60" font-size="11" fill="#7e3d12" text-anchor="middle" >185</text>
<rect x="812.50" y="444.28" width="27.60" height="42.83" fill="#a5a5a5" />
<text x="826.30" y="469.55" font-size="11" fill="#454545" text-anchor="middle" >175</text>
<text x="826.30" y="639.85" font-size="11" fill="#636363" text-anchor="middle" textLength="62.00" lengthAdjust="spacingAndGlyphs" >30 a 34 años</text>
<rect x="881.90" y="535.33" width="27.60" height="85.17" fill="#5b9bd5" />
<text x="895.70" y="581.76" font-size="11" fill="#2f5c86" text-anchor="middle" >348</text>
<rect x="881.90" y="492.01" width="27.60" height="43.32" fill="#ed7d31" />
<text x="895.70" y="517.52" font-size="11" fill="#7e3d12" text-anchor="middle" >177</text>
<rect x="881.90" y="450.15" width="27.60" height="41.85" fill="#a5a5a5" />
<text x="895.70" y="474.93" font-size="11" fill="#454545" text-anchor="middle" >171</text>
<text x="895.70" y="639.85" font-size="11" fill="#636363" text-anchor="middle" textLength="62.00" lengthAdjust="spacingAndGlyphs" >35 a 39 años</text>
<rect x="951.30" y="541.45" width="27.60" height="79.05" fill="#5b9bd5" />
<text x="965.10" y="584.82" font-size="11" fill="#2f5c86" text-anchor="middle" >323</text>
<rect x="951.30" y="501.55" width="27.60" height="39.89" fill="#ed7d31" />
<text x="965.10" y="525.35" font-size="11" fill="#7e3d12" text-anchor="middle" >163</text>
<rect x="951.30" y="462.39" width="27.60" height="39.16" fill="#a5a5a5" />
<text x="965.10" y="485.82" font-size="11" fill="#454545" text-anchor="middle" >160</text>
<text x="965.10" y="639.85" font-size="11" fill="#636363" text-anchor="middle" textLength="62.00" lengthAdjust="spacingAndGlyphs" >40 a 44 años</text>
<rect x="1020.70" y="553.68" width="27.60" height="66.82" fill="#5b9bd5" />
<text x="1034.50" y="590.94" font-size="11" fill="#2f5c86" text-anchor="middle" >273</text>
<rect x="1020.70" y="518.68" width="27.60" height="35.00" fill="#ed7d31" />
<text x="1034.50" y="540.03" font-size="11" fill="#7e3d12" text-anchor="middle" >143</text>
<rect x="1020.70" y="486.87" width="27.60" height="31.82" fill="#a5a5a5" />
<text x="1034.50" y="506.63" font-size="11" fill="#454545" text-anchor="middle" >130</text>
<text x="1034.50" y="639.85" font-size="11" fill="#636363" text-anchor="middle" textLength="62.00" lengthAdjust="spacingAndGlyphs" >45 a 49 años</text>
<rect x="1090.10" y="565.43" width="27.60" height="55.07" fill="#5b9bd5" />
<text x="1103.90" y="596.82" font-size="11" fill="#2f5c86" text-anchor="middle" >225</text>
<rect x="1090.10" y="534.84" width="27.60" height="30.59" fill="#ed7d31" />
<text x="1103.90" y="553.98" font-size="11" fill="#7e3d12" text-anchor="middle" >125</text>
<rect x="1090.10" y="510.36" width="27.60" height="24.48" fill="#a5a5a5" />
<text x="1103.90" y="526.45" font-size="11" fill="#454545" text-anchor="middle" >100</text>
<text x="1103.90" y="639.85" font-size="11" fill="#636363" text-anchor="middle" textLength="62.00" lengthAdjust="spacingAndGlyphs" >50 a 54 años</text>
<rect x="1159.50" y="575.96" width="27.60" height="44.54" fill="#5b9bd5" />
<text x="1173.30" y="602.08" font-size="11" fill="#2f5c86" text-anchor="middle" >182</text>
<rect x="1159.50" y="547.32" width="27.60" height="28.64" fill="#ed7d31" />
<text x="1173.30" y="565.49" font-size="11" fill="#7e3d12" text-anchor="middle" >117</text>
<rect x="1159.50" y="531.41" width="27.60" height="15.91" fill="#a5a5a5" />
<text x="1173.30" y="543.22" font-size="11" fill="#454545" text-anchor="middle" >65</text>
<text x="1173.30" y="639.85" font-size="11" fill="#636363" text-anchor="middle" textLength="62.00" lengthAdjust="spacingAndGlyphs" >55 a 59 años</text>
<rect x="1228.90" y="582.07" width="27.60" height="38.43" fill="#5b9bd5" />
<text x="1242.70" y="605.14" font-size="11" fill="#2f5c86" text-anchor="middle" >157</text>
<rect x="1228.90" y="558.82" width="27.60" height="23.25" fill="#ed7d31" />
<text x="1242.70" y="574.30" font-size="11" fill="#7e3d12" text-anchor="middle" >95</text>
<rect x="1228.90" y="543.65" width="27.60" height="15.17" fill="#a5a5a5" />
<text x="1242.70" y="555.09" font-size="11" fill="#454545" text-anchor="middle" >62</text>
<text x="1242.70" y="639.85" font-size="11" fill="#636363" text-anchor="middle" textLength="62.00" lengthAdjust="spacingAndGlyphs" >60 a 64 años</text>
<rect x="1298.30" y="585.75" width="27.60" height="34.75" fill="#5b9bd5" />
<text x="1312.10" y="606.97" font-size="11" fill="#2f5c86" text-anchor="middle" >142</text>
<rect x="1298.30" y="563.47" width="27.60" height="22.27" fill="#ed7d31" />
<text x="1312.10" y="578.46" font-size="11" fill="#7e3d12" text-anchor="middle" >91</text>
<rect x="1298.30" y="550.99" width="27.60" height="12.48" fill="#a5a5a5" />
<text x="1312.10" y="561.08" font-size="11" fill="#454545" text-anchor="middle" >51</text>
<text x="1312.10" y="639.85" font-size="11" fill="#636363" text-anchor="middle" >65 o más</text>
</g>
<rect x="36.50" y="414.20" width="567.00" height="240.00" fill="#ffffff" />
<line x1="84.00" y1="606.00" x2="588.00" y2="606.00" stroke="#e2e2e2" stroke-width="1" />
<text x="72.20" y="609.85" font-size="11" fill="#636363" text-anchor="end" >0%</text>
<line x1="84.00" y1="588.29" x2="588.00" y2="588.29" stroke="#e2e2e2" stroke-width="1" />
<text x="72.20" y="592.14" font-size="11" fill="#636363" text-anchor="end" >10%</text>
<line x1="84.00" y1="570.58" x2="588.00" y2="570.58" stroke="#e2e2e2" stroke-width="1" />
<text x="72.20" y="574.43" font-size="11" fill="#636363" text-anchor="end" >20%</text>
<line x1="84.00" y1="552.87" x2="588.00" y2="552.87" stroke="#e2e2e2" stroke-width="1" />
<text x="72.20" y="556.72" font-size="11" fill="#636363" text-anchor="end" >30%</text>
<line x1="84.00" y1="535.16" x2="588.00" y2="535.16" stroke="#e2e2e2" stroke-width="1" />
<text x="72.20" y="539.01" font-size="11" fill="#636363" text-anchor="end" >40%</text>
<line x1="84.00" y1="517.45" x2="588.00" y2="517.45" stroke="#e2e2e2" stroke-width="1" />
<text x="72.20" y="521.30" font-size="11" fill="#636363" text-anchor="end" >50%</text>
<line x1="84.00" y1="499.74" x2="588.00" y2="499.74" stroke="#e2e2e2" stroke-width="1" />
<text x="72.20" y="503.59" font-size="11" fill="#636363" text-anchor="end" >60%</text>
<line x1="84.00" y1="482.03" x2="588.00" y2="482.03" stroke="#e2e2e2" stroke-width="1" />
<text x="72.20" y="485.88" font-size="11" fill="#636363" text-anchor="end" >70%</text>
<line x1="84.00" y1="464.32" x2="588.00" y2="464.32" stroke="#e2e2e2" stroke-width="1" />
<text x="72.20" y="468.17" font-size="11" fill="#636363" text-anchor="end" >80%</text>
<line x1="84.00" y1="446.61" x2="588.00" y2="446.61" stroke="#e2e2e2" stroke-width="1" />
<text x="72.20" y="450.46" font-size="11" fill="#636363" text-anchor="end" >90%</text>
<line x1="84.00" y1="428.90" x2="588.00" y2="428.90" stroke="#e2e2e2" stroke-width="1" />
<text x="72.20" y="432.75" font-size="11" fill="#636363" text-anchor="end" >100%</text>
<rect x="99.60" y="517.45" width="19.80" height="88.55" fill="#5b9bd5" />
<rect x="99.60" y="467.64" width="19.80" height="49.81" fill="#ed7d31" />
<rect x="99.60" y="428.90" width="19.80" height="38.74" fill="#a5a5a5" />
<text x="109.50" y="565.58" font-size="11" fill="#2f5c86" text-anchor="middle" >320</text>
<text x="109.50" y="496.40" font-size="11" fill="#7e3d12" text-anchor="middle" >180</text>
<text x="109.50" y="452.12" font-size="11" fill="#454545" text-anchor="middle" >140</text>
<text x="109.50" y="625.85" font-size="11" fill="#636363" text-anchor="middle" >20 a 24</text>
<text x="109.50" y="640.85" font-size="11" fill="#636363" text-anchor="middle" >años</text>
<line x1="96.00" y1="438.67" x2="96.00" y2="457.87" stroke="#b8b8b8" stroke-width="1" />
<line x1="123.00" y1="438.67" x2="123.00" y2="457.87" stroke="#b8b8b8" stroke-width="1" />
<line x1="96.00" y1="438.67" x2="123.00" y2="438.67" stroke="#9a9a9a" stroke-width="0.6" />
<line x1="96.00" y1="457.87" x2="123.00" y2="457.87" stroke="#9a9a9a" stroke-width="0.6" />
<circle cx="96.00" cy="438.67" r="2.6" fill="#d5e3e8" stroke="#6f97a6" stroke-width="1"/>
<circle cx="96.00" cy="457.87" r="2.6" fill="#d5e3e8" stroke="#6f97a6" stroke-width="1"/>
<circle cx="123.00" cy="438.67" r="2.6" fill="#d5e3e8" stroke="#6f97a6" stroke-width="1"/>
<circle cx="123.00" cy="457.87" r="2.6" fill="#d5e3e8" stroke="#6f97a6" stroke-width="1"/>
<rect x="150.00" y="517.45" width="19.80" height="88.55" fill="#5b9bd5" />
<rect x="150.00" y="470.22" width="19.80" height="47.23" fill="#ed7d31" />
<rect x="150.00" y="428.90" width="19.80" height="41.32" fill="#a5a5a5" />
<text x="159.90" y="565.58" font-size="11" fill="#2f5c86" text-anchor="middle" >375</text>
<text x="159.90" y="497.69" font-size="11" fill="#7e3d12" text-anchor="middle" >200</text>
<text x="159.90" y="453.41" font-size="11" fill="#454545" text-anchor="middle" >175</text>
<text x="159.90" y="625.85" font-size="11" fill="#636363" text-anchor="middle" >25 a 29</text>
<text x="159.90" y="640.85" font-size="11" fill="#636363" text-anchor="middle" >años</text>
<line x1="146.40" y1="439.96" x2="146.40" y2="459.16" stroke="#b8b8b8" stroke-width="1" />
<line x1="173.40" y1="439.96" x2="173.40" y2="459.16" stroke="#b8b8b8" stroke-width="1" />
<line x1="146.40" y1="439.96" x2="173.40" y2="439.96" stroke="#9a9a9a" stroke-width="0.6" />
<line x1="146.40" y1="459.16" x2="173.40" y2="459.16" stroke="#9a9a9a" stroke-width="0.6" />
<circle cx="146.40" cy="439.96" r="2.6" fill="#d5e3e8" stroke="#6f97a6" stroke-width="1"/>
<circle cx="146.40" cy="459.16" r="2.6" fill="#d5e3e8" stroke="#6f97a6" stroke-width="1"/>
<circle cx="173.40" cy="439.96" r="2.6" fill="#d5e3e8" stroke="#6f97a6" stroke-width="1"/>
<circle cx="173.40" cy="459.16" r="2.6" fill="#d5e3e8" stroke="#6f97a6" stroke-width="1"/>
<rect x="200.40" y="517.45" width="19.80" height="88.55" fill="#5b9bd5" />
<rect x="200.40" y="471.95" width="19.80" height="45.50" fill="#ed7d31" />
<rect x="200.40" y="428.90" width="19.80" height="43.05" fill="#a5a5a5" />
<text x="210.30" y="565.58" font-size="11" fill="#2f5c86" text-anchor="middle" >360</text>
<text x="210.30" y="498.55" font-size="11" fill="#7e3d12" text-anchor="middle" >185</text>
<text x="210.30" y="454.27" font-size="11" fill="#454545" text-anchor="middle" >175</text>
<text x="210.30" y="625.85" font-size="11" fill="#636363" text-anchor="middle" >30 a 34</text>
<text x="210.30" y="640.85" font-size="11" fill="#636363" text-anchor="middle" >años</text>
<line x1="196.80" y1="440.82" x2="196.80" y2="460.02" stroke="#b8b8b8" stroke-width="1" />
<line x1="223.80" y1="440.82" x2="223.80" y2="460.02" stroke="#b8b8b8" stroke-width="1" />
<line x1="196.80" y1="440.82" x2="223.80" y2="440.82" stroke="#9a9a9a" stroke-width="0.6" />
<line x1="196.80" y1="460.02" x2="223.80" y2="460.02" stroke="#9a9a9a" stroke-width="0.6" />
<circle cx="196.80" cy="440.82" r="2.6" fill="#d5e3e8" stroke="#6f97a6" stroke-width="1"/>
<circle cx="196.80" cy="460.02" r="2.6" fill="#d5e3e8" stroke="#6f97a6" stroke-width="1"/>
<circle cx="223.80" cy="440.82" r="2.6" fill="#d5e3e8" stroke="#6f97a6" stroke-width="1"/>
<circle cx="223.80" cy="460.02" r="2.6" fill="#d5e3e8" stroke="#6f97a6" stroke-width="1"/>
<rect x="250.80" y="517.45" width="19.80" height="88.55" fill="#5b9bd5" />
<rect x="250.80" y="472.41" width="19.80" height="45.04" fill="#ed7d31" />
<rect x="250.80" y="428.90" width="19.80" height="43.51" fill="#a5a5a5" />
<text x="260.70" y="565.58" font-size="11" fill="#2f5c86" text-anchor="middle" >348</text>
<text x="260.70" y="498.78" font-size="11" fill="#7e3d12" text-anchor="middle" >177</text>
<text x="260.70" y="454.51" font-size="11" fill="#454545" text-anchor="middle" >171</text>
<text x="260.70" y="625.85" font-size="11" fill="#636363" text-anchor="middle" >35 a 39</text>
<text x="260.70" y="640.85" font-size="11" fill="#636363" text-anchor="middle" >años</text>
<line x1="247.20" y1="441.06" x2="247.20" y2="460.26" stroke="#b8b8b8" stroke-width="1" />
<line x1="274.20" y1="441.06" x2="274.20" y2="460.26" stroke="#b8b8b8" stroke-width="1" />
<line x1="247.20" y1="441.06" x2="274.20" y2="441.06" stroke="#9a9a9a" stroke-width="0.6" />
<line x1="247.20" y1="460.26" x2="274.20" y2="460.26" stroke="#9a9a9a" stroke-width="0.6" />
<circle cx="247.20" cy="441.06" r="2.6" fill="#d5e3e8" stroke="#6f97a6" stroke-width="1"/>
<circle cx="247.20" cy="460.26" r="2.6" fill="#d5e3e8" stroke="#6f97a6" stroke-width="1"/>
<circle cx="274.20" cy="441.06" r="2.6" fill="#d5e3e8" stroke="#6f97a6" stroke-width="1"/>
<circle cx="274.20" cy="460.26" r="2.6" fill="#d5e3e8" stroke="#6f97a6" stroke-width="1"/>
<rect x="301.20" y="517.45" width="19.80" height="88.55" fill="#5b9bd5" />
<rect x="301.20" y="472.76" width="19.80" height="44.69" fill="#ed7d31" />
<rect x="301.20" y="428.90" width="19.80" height="43.86" fill="#a5a5a5" />
<text x="311.10" y="565.58" font-size="11" fill="#2f5c86" text-anchor="middle" >323</text>
<text x="311.10" y="498.96" font-size="11" fill="#7e3d12" text-anchor="middle" >163</text>
<text x="311.10" y="454.68" font-size="11" fill="#454545" text-anchor="middle" >160</text>
<text x="311.10" y="625.85" font-size="11" fill="#636363" text-anchor="middle" >40 a 44</text>
<text x="311.10" y="640.85" font-size="11" fill="#636363" text-anchor="middle" >años</text>
<line x1="297.60" y1="441.23" x2="297.60" y2="460.43" stroke="#b8b8b8" stroke-width="1" />
<line x1="324.60" y1="441.23" x2="324.60" y2="460.43" stroke="#b8b8b8" stroke-width="1" />
<line x1="297.60" y1="441.23" x2="324.60" y2="441.23" stroke="#9a9a9a" stroke-width="0.6" />
<line x1="297.60" y1="460.43" x2="324.60" y2="460.43" stroke="#9a9a9a" stroke-width="0.6" />
<circle cx="297.60" cy="441.23" r="2.6" fill="#d5e3e8" stroke="#6f97a6" stroke-width="1"/>
<circle cx="297.60" cy="460.43" r="2.6" fill="#d5e3e8" stroke="#6f97a6" stroke-width="1"/>
<circle cx="324.60" cy="441.23" r="2.6" fill="#d5e3e8" stroke="#6f97a6" stroke-width="1"/>
<circle cx="324.60" cy="460.43" r="2.6" fill="#d5e3e8" stroke="#6f97a6" stroke-width="1"/>
<rect x="351.60" y="517.45" width="19.80" height="88.55" fill="#5b9bd5" />
<rect x="351.60" y="471.07" width="19.80" height="46.38" fill="#ed7d31" />
<rect x="351.60" y="428.90" width="19.80" height="42.17" fill="#a5a5a5" />
<text x="361.50" y="565.58" font-size="11" fill="#2f5c86" text-anchor="middle" >273</text>
<text x="361.50" y="498.11" font-size="11" fill="#7e3d12" text-anchor="middle" >143</text>
<text x="361.50" y="453.83" font-size="11" fill="#454545" text-anchor="middle" >130</text>
<text x="361.50" y="625.85" font-size="11" fill="#636363" text-anchor="middle" >45 a 49</text>
<text x="361.50" y="640.85" font-size="11" fill="#636363" text-anchor="middle" >años</text>
<line x1="348.00" y1="440.38" x2="348.00" y2="459.58" stroke="#b8b8b8" stroke-width="1" />
<line x1="375.00" y1="440.38" x2="375.00" y2="459.58" stroke="#b8b8b8" stroke-width="1" />
<line x1="348.00" y1="440.38" x2="375.00" y2="440.38" stroke="#9a9a9a" stroke-width="0.6" />
<line x1="348.00" y1="459.58" x2="375.00" y2="459.58" stroke="#9a9a9a" stroke-width="0.6" />
<circle cx="348.00" cy="440.38" r="2.6" fill="#d5e3e8" stroke="#6f97a6" stroke-width="1"/>
<circle cx="348.00" cy="459.58" r="2.6" fill="#d5e3e8" stroke="#6f97a6" stroke-width="1"/>
<circle cx="375.00" cy="440.38" r="2.6" fill="#d5e3e8" stroke="#6f97a6" stroke-width="1"/>
<circle cx="375.00" cy="459.58" r="2.6" fill="#d5e3e8" stroke="#6f97a6" stroke-width="1"/>
<rect x="402.00" y="517.45" width="19.80" height="88.55" fill="#5b9bd5" />
<rect x="402.00" y="468.26" width="19.80" height="49.19" fill="#ed7d31" />
<rect x="402.00" y="428.90" width="19.80" height="39.36" fill="#a5a5a5" />
<text x="411.90" y="565.58" font-size="11" fill="#2f5c86" text-anchor="middle" >225</text>
<text x="411.90" y="496.70" font-size="11" fill="#7e3d12" text-anchor="middle" >125</text>
<text x="411.90" y="452.43" font-size="11" fill="#454545" text-anchor="middle" >100</text>
<text x="411.90" y="625.85" font-size="11" fill="#636363" text-anchor="middle" >50 a 54</text>
<text x="411.90" y="640.85" font-size="11" fill="#636363" text-anchor="middle" >años</text>
<line x1="398.40" y1="438.98" x2="398.40" y2="458.18" stroke="#b8b8b8" stroke-width="1" />
<line x1="425.40" y1="438.98" x2="425.40" y2="458.18" stroke="#b8b8b8" stroke-width="1" />
<line x1="398.40" y1="438.98" x2="425.40" y2="438.98" stroke="#9a9a9a" stroke-width="0.6" />
<line x1="398.40" y1="458.18" x2="425.40" y2="458.18" stroke="#9a9a9a" stroke-width="0.6" />
<circle cx="398.40" cy="438.98" r="2.6" fill="#d5e3e8" stroke="#6f97a6" stroke-width="1"/>
<circle cx="398.40" cy="458.18" r="2.6" fill="#d5e3e8" stroke="#6f97a6" stroke-width="1"/>
<circle cx="425.40" cy="438.98" r="2.6" fill="#d5e3e8" stroke="#6f97a6" stroke-width="1"/>
<circle cx="425.40" cy="458.18" r="2.6" fill="#d5e3e8" stroke="#6f97a6" stroke-width="1"/>
<rect x="452.40" y="517.45" width="19.80" height="88.55" fill="#5b9bd5" />
<rect x="452.40" y="460.53" width="19.80" height="56.93" fill="#ed7d31" />
<rect x="452.40" y="428.90" width="19.80" height="31.63" fill="#a5a5a5" />
<text x="462.30" y="565.58" font-size="11" fill="#2f5c86" text-anchor="middle" >182</text>
<text x="462.30" y="492.84" font-size="11" fill="#7e3d12" text-anchor="middle" >117</text>
<text x="462.30" y="448.56" font-size="11" fill="#454545" text-anchor="middle" >65</text>
<text x="462.30" y="625.85" font-size="11" fill="#636363" text-anchor="middle" >55 a 59</text>
<text x="462.30" y="640.85" font-size="11" fill="#636363" text-anchor="middle" >años</text>
<line x1="451.90" y1="435.11" x2="451.90" y2="454.31" stroke="#b8b8b8" stroke-width="1" />
<line x1="472.70" y1="435.11" x2="472.70" y2="454.31" stroke="#b8b8b8" stroke-width="1" />
<line x1="451.90" y1="435.11" x2="472.70" y2="435.11" stroke="#9a9a9a" stroke-width="0.6" />
<line x1="451.90" y1="454.31" x2="472.70" y2="454.31" stroke="#9a9a9a" stroke-width="0.6" />
<circle cx="451.90" cy="435.11" r="2.6" fill="#d5e3e8" stroke="#6f97a6" stroke-width="1"/>
<circle cx="451.90" cy="454.31" r="2.6" fill="#d5e3e8" stroke="#6f97a6" stroke-width="1"/>
<circle cx="472.70" cy="435.11" r="2.6" fill="#d5e3e8" stroke="#6f97a6" stroke-width="1"/>
<circle cx="472.70" cy="454.31" r="2.6" fill="#d5e3e8" stroke="#6f97a6" stroke-width="1"/>
<rect x="502.80" y="517.45" width="19.80" height="88.55" fill="#5b9bd5" />
<rect x="502.80" y="463.87" width="19.80" height="53.58" fill="#ed7d31" />
<rect x="502.80" y="428.90" width="19.80" height="34.97" fill="#a5a5a5" />
<text x="512.70" y="565.58" font-size="11" fill="#2f5c86" text-anchor="middle" >157</text>
<text x="512.70" y="494.51" font-size="11" fill="#7e3d12" text-anchor="middle" >95</text>
<text x="512.70" y="450.23" font-size="11" fill="#454545" text-anchor="middle" >62</text>
<text x="512.70" y="625.85" font-size="11" fill="#636363" text-anchor="middle" >60 a 64</text>
<text x="512.70" y="640.85" font-size="11" fill="#636363" text-anchor="middle" >años</text>
<line x1="502.30" y1="436.78" x2="502.30" y2="455.98" stroke="#b8b8b8" stroke-width="1" />
<line x1="523.10" y1="436.78" x2="523.10" y2="455.98" stroke="#b8b8b8" stroke-width="1" />
<line x1="502.30" y1="436.78" x2="523.10" y2="436.78" stroke="#9a9a9a" stroke-width="0.6" />
<line x1="502.30" y1="455.98" x2="523.10" y2="455.98" stroke="#9a9a9a" stroke-width="0.6" />
<circle cx="502.30" cy="436.78" r="2.6" fill="#d5e3e8" stroke="#6f97a6" stroke-width="1"/>
<circle cx="502.30" cy="455.98" r="2.6" fill="#d5e3e8" stroke="#6f97a6" stroke-width="1"/>
<circle cx="523.10" cy="436.78" r="2.6" fill="#d5e3e8" stroke="#6f97a6" stroke-width="1"/>
<circle cx="523.10" cy="455.98" r="2.6" fill="#d5e3e8" stroke="#6f97a6" stroke-width="1"/>
<rect x="553.20" y="517.45" width="19.80" height="88.55" fill="#5b9bd5" />
<rect x="553.20" y="460.70" width="19.80" height="56.75" fill="#ed7d31" />
<rect x="553.20" y="428.90" width="19.80" height="31.80" fill="#a5a5a5" />
<text x="563.10" y="565.58" font-size="11" fill="#2f5c86" text-anchor="middle" >142</text>
<text x="563.10" y="492.93" font-size="11" fill="#7e3d12" text-anchor="middle" >91</text>
<text x="563.10" y="448.65" font-size="11" fill="#454545" text-anchor="middle" >51</text>
<text x="563.10" y="625.85" font-size="11" fill="#636363" text-anchor="middle" >65 o más</text>
<line x1="552.70" y1="435.20" x2="552.70" y2="454.40" stroke="#b8b8b8" stroke-width="1" />
<line x1="573.50" y1="435.20" x2="573.50" y2="454.40" stroke="#b8b8b8" stroke-width="1" />
<line x1="552.70" y1="435.20" x2="573.50" y2="435.20" stroke="#9a9a9a" stroke-width="0.6" />
<line x1="552.70" y1="454.40" x2="573.50" y2="454.40" stroke="#9a9a9a" stroke-width="0.6" />
<circle cx="552.70" cy="435.20" r="2.6" fill="#d5e3e8" stroke="#6f97a6" stroke-width="1"/>
<circle cx="552.70" cy="454.40" r="2.6" fill="#d5e3e8" stroke="#6f97a6" stroke-width="1"/>
<circle cx="573.50" cy="435.20" r="2.6" fill="#d5e3e8" stroke="#6f97a6" stroke-width="1"/>
<circle cx="573.50" cy="454.40" r="2.6" fill="#d5e3e8" stroke="#6f97a6" stroke-width="1"/>
<rect x="36.3" y="414.2" width="567.2" height="239.8" fill="none" stroke="#e6e6e6" stroke-width="2.8"/>
<rect x="34.5" y="412.4" width="570.8" height="243.4" fill="none" stroke="#c4c4c4" stroke-width="0.8"/>
<circle cx="36" cy="413.8" r="3" fill="#fdfdfd" stroke="#d2d2d2" stroke-width="0.9"/>
<circle cx="320" cy="414" r="3" fill="#fdfdfd" stroke="#d2d2d2" stroke-width="0.9"/>
<circle cx="603.8" cy="414" r="3" fill="#fdfdfd" stroke="#d2d2d2" stroke-width="0.9"/>
<circle cx="36" cy="533" r="3" fill="#fdfdfd" stroke="#d2d2d2" stroke-width="0.9"/>
<circle cx="603.8" cy="533" r="3" fill="#fdfdfd" stroke="#d2d2d2" stroke-width="0.9"/>
<circle cx="36" cy="654" r="3" fill="#fdfdfd" stroke="#d2d2d2" stroke-width="0.9"/>
<circle cx="320" cy="654" r="3" fill="#fdfdfd" stroke="#d2d2d2" stroke-width="0.9"/>
<circle cx="603.8" cy="654" r="3" fill="#fdfdfd" stroke="#d2d2d2" stroke-width="0.9"/>
<line x1="1260.50" y1="107.00" x2="1260.50" y2="680.50" stroke="#c9c9c9" stroke-width="1" />
<rect x="1261.00" y="86.80" width="19.00" height="593.70" fill="#f0f0f0" />
<rect x="1264" y="89.2" width="13.8" height="12.8" fill="#ffffff" stroke="#c8c8c8" stroke-width="0.8"/>
<path d="M1267.6 97.8 L1270.9 94 L1274.2 97.8 Z" fill="#444"/>
<rect x="1264" y="102.5" width="13.8" height="544" fill="#ffffff" stroke="#cfcfcf" stroke-width="0.8"/>
<rect x="1264.50" y="647.00" width="13.00" height="21.00" fill="#d6d6d6" />
<rect x="1264" y="668" width="13.8" height="12.3" fill="#ffffff" stroke="#c8c8c8" stroke-width="0.8"/>
<path d="M1267.6 672.6 L1274.2 672.6 L1270.9 676.4 Z" fill="#444"/>
<rect x="0.00" y="680.50" width="1280.00" height="24.50" fill="#f0f0f0" />
<line x1="0.00" y1="680.60" x2="1280.00" y2="680.60" stroke="#bdbdbd" stroke-width="1" />
<path d="M28 689 L25 692.5 L28 696" fill="none" stroke="#a8a8a8" stroke-width="1.2"/>
<path d="M50 689 L53 692.5 L50 696" fill="none" stroke="#a8a8a8" stroke-width="1.2"/>
<line x1="89.40" y1="684.00" x2="89.40" y2="702.00" stroke="#c8c8c8" stroke-width="1" />
<line x1="100.00" y1="692.50" x2="104.00" y2="692.50" stroke="#888" stroke-width="1.2" />
<rect x="114.70" y="680.10" width="75.90" height="21.50" fill="#ffffff" />
<line x1="114.90" y1="680.50" x2="114.90" y2="701.00" stroke="#b8b8b8" stroke-width="0.8" />
<line x1="190.40" y1="680.50" x2="190.40" y2="701.00" stroke="#b8b8b8" stroke-width="0.8" />
<rect x="114.70" y="700.00" width="75.90" height="2.20" fill="#1e6b41" />
<text x="152.60" y="695.70" font-size="12" fill="#35604a" text-anchor="middle" font-weight="bold" textLength="53.20" lengthAdjust="spacingAndGlyphs" >Columnas</text>
<text x="204.60" y="696.20" font-size="12" fill="#606060" text-anchor="start" textLength="84.40" lengthAdjust="spacingAndGlyphs" >Circular y anillos</text>
<line x1="302.60" y1="683.00" x2="302.60" y2="701.00" stroke="#c8c8c8" stroke-width="1" />
<circle cx="339.4" cy="692.6" r="6.8" fill="none" stroke="#666" stroke-width="1.3"/><path d="M335.6 692.6 H343.2 M339.4 688.8 V696.4" stroke="#555" stroke-width="1.6"/>
<g fill="#777"><circle cx="769" cy="688.8" r="0.9"/><circle cx="769" cy="692.5" r="0.9"/><circle cx="769" cy="696.2" r="0.9"/></g>
<rect x="783.3" y="686.5" width="12.5" height="13.3" fill="#ffffff" stroke="#c8c8c8" stroke-width="0.8"/>
<path d="M791.3 689.7 L787.5 693.1 L791.3 696.5 Z" fill="#444"/>
<rect x="796.5" y="686.5" width="413" height="13.3" fill="#ffffff" stroke="#cfcfcf" stroke-width="0.8"/>
<rect x="1209.50" y="687.00" width="38.50" height="12.50" fill="#d9d9d9" />
<rect x="1248" y="686.5" width="12.5" height="13.3" fill="#ffffff" stroke="#c8c8c8" stroke-width="0.8"/>
<path d="M1252.5 689.7 L1256.3 693.1 L1252.5 696.5 Z" fill="#444"/>
<rect x="0.00" y="704.80" width="1280.00" height="15.20" fill="#0a6330" />
<line x1="0.00" y1="705.20" x2="1280.00" y2="705.20" stroke="#16573a" stroke-width="1" />
<text x="19.30" y="717.82" font-size="11.5" fill="#d2f2dc" text-anchor="middle" textLength="23.50" lengthAdjust="spacingAndGlyphs" stroke="#d2f2dc" stroke-width="0.3">LISTO</text>
<g fill="#c9ecd3"><circle cx="84.5" cy="710" r="2.3"/><rect x="86.5" y="709" width="6.5" height="11"/><rect x="82" y="712.5" width="11" height="7.5"/></g><g fill="#0a6330"><rect x="83.5" y="714.5" width="3" height="1.2"/><rect x="83.5" y="717" width="3" height="1.2"/><rect x="88" y="714" width="1.2" height="5"/><rect x="90.3" y="711" width="1.2" height="8"/></g>
<rect x="1018.00" y="705.00" width="33.00" height="15.00" fill="#0b4f27" />
<rect x="1028.50" y="707.50" width="2.20" height="2.20" fill="#d8e6dc" />
<rect x="1028.50" y="710.70" width="2.20" height="2.20" fill="#d8e6dc" />
<rect x="1028.50" y="713.90" width="2.20" height="2.20" fill="#d8e6dc" />
<rect x="1028.50" y="717.10" width="2.20" height="2.20" fill="#d8e6dc" />
<rect x="1031.70" y="707.50" width="2.20" height="2.20" fill="#d8e6dc" />
<rect x="1031.70" y="710.70" width="2.20" height="2.20" fill="#d8e6dc" />
<rect x="1031.70" y="713.90" width="2.20" height="2.20" fill="#d8e6dc" />
<rect x="1031.70" y="717.10" width="2.20" height="2.20" fill="#d8e6dc" />
<rect x="1034.90" y="707.50" width="2.20" height="2.20" fill="#d8e6dc" />
<rect x="1034.90" y="710.70" width="2.20" height="2.20" fill="#d8e6dc" />
<rect x="1034.90" y="713.90" width="2.20" height="2.20" fill="#d8e6dc" />
<rect x="1034.90" y="717.10" width="2.20" height="2.20" fill="#d8e6dc" />
<rect x="1038.10" y="707.50" width="2.20" height="2.20" fill="#d8e6dc" />
<rect x="1038.10" y="710.70" width="2.20" height="2.20" fill="#d8e6dc" />
<rect x="1038.10" y="713.90" width="2.20" height="2.20" fill="#d8e6dc" />
<rect x="1038.10" y="717.10" width="2.20" height="2.20" fill="#d8e6dc" />
<rect x="1062.5" y="708" width="12.5" height="11" fill="none" stroke="#cde0d3" stroke-width="1"/><rect x="1065.5" y="710.5" width="6.5" height="6" fill="none" stroke="#cde0d3" stroke-width="0.8"/>
<rect x="1096.5" y="707.5" width="12.5" height="11.5" fill="none" stroke="#cde0d3" stroke-width="1"/><rect x="1099" y="707.5" width="2.5" height="5" fill="#cde0d3"/><rect x="1103.5" y="707.5" width="2.5" height="5" fill="#cde0d3"/>
<line x1="1123.50" y1="714.00" x2="1128.00" y2="714.00" stroke="#e0ece4" stroke-width="2" />
<line x1="1132.00" y1="714.00" x2="1221.00" y2="714.00" stroke="#b9d4c2" stroke-width="1" />
<rect x="1178.00" y="709.50" width="3.50" height="9.00" fill="#e4efe8" />
<line x1="1225.00" y1="714.00" x2="1232.50" y2="714.00" stroke="#e0ece4" stroke-width="2" />
<line x1="1228.80" y1="710.20" x2="1228.80" y2="717.80" stroke="#e0ece4" stroke-width="2" />
<text x="1259.50" y="717.40" font-size="12" fill="#d8f2dc" text-anchor="middle" textLength="27.00" lengthAdjust="spacingAndGlyphs" >115 %</text>
</svg>
</body></html>
